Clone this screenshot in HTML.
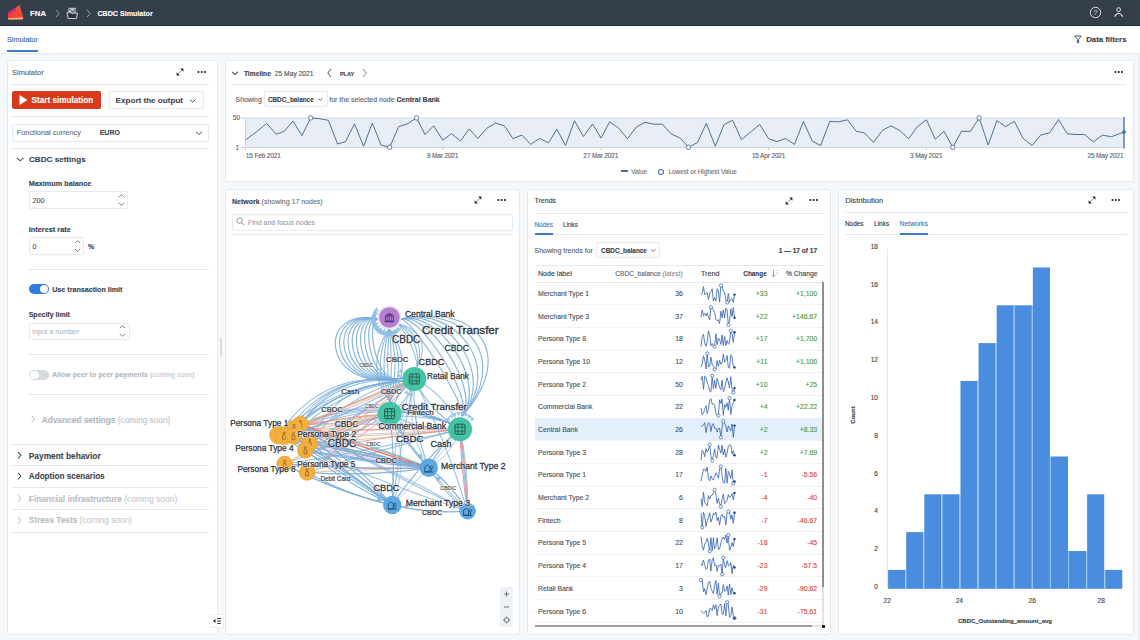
<!DOCTYPE html><html><head><meta charset="utf-8"><style>
html,body{margin:0;padding:0;width:1140px;height:640px;overflow:hidden;background:#f5f8fb;font-family:"Liberation Sans", sans-serif}
.t{position:absolute;white-space:nowrap;-webkit-text-stroke:0.12px currentColor}
.b{position:absolute;display:block}
</style></head><body>
<div class="b" style="left:0px;top:0px;width:1140px;height:25px;background:#343f4b"></div>
<div class="b" style="left:0px;top:25px;width:1140px;height:1px;background:#1d252d"></div>
<svg class="b" style="left:6px;top:3px;" width="19" height="18" viewBox="0 0 19 18"><defs><linearGradient id="lg" x1="0" y1="0" x2="0" y2="1"><stop offset="0" stop-color="#ee5a4a"/><stop offset="1" stop-color="#f53c22"/></linearGradient></defs><path d="M1.9 15.6 L2.1 9.6 L9.7 4.8 L13.6 1.8 L17.2 14.6 Z" fill="url(#lg)"/><path d="M2.1 9.6 L9.7 4.8 L10.6 6.6 L2.4 12.8 Z" fill="#d4237c"/><path d="M1.9 15 L17.2 14.2 L16.9 16.4 L2.6 16.7 Z" fill="#f2a877"/></svg>
<div class="t" style="left:30px;top:8.30px;line-height:12px;font-size:7.8px;font-weight:bold;color:#fff;">FNA</div>
<svg class="b" style="left:52.5px;top:8.8px;" width="9" height="9" viewBox="0 0 9 9"><path d="M3.1 1 L6.25 4.5 L3.1 8" fill="none" stroke="#9aa3ad" stroke-width="1"/></svg>
<svg class="b" style="left:66px;top:7px;" width="13" height="13" viewBox="0 0 13 13"><path d="M2.3 1.2 Q2.3 0.8 2.8 0.8 L9.6 0.8 Q10.1 0.8 10.1 1.3 L10.1 5.6 L2.3 5.6 Z" fill="#b9c0c8"/><path d="M2.8 1.6 L6 4.4 L9.6 3.8 M9.2 1.6 L9.4 3.6" fill="none" stroke="#343f4b" stroke-width="0.8"/><path d="M1 5.6 Q3.5 4.6 6 6.2 L11.6 6.2 L10.4 11.5 L2.1 11.5 Z" fill="#343f4b" stroke="#c4cad1" stroke-width="1"/><path d="M3.4 8.4 H9.4 M3.4 10 H9.4" stroke="#1e262f" stroke-width="0.8"/></svg>
<svg class="b" style="left:83.9px;top:8.8px;" width="9" height="9" viewBox="0 0 9 9"><path d="M3.1 1 L6.25 4.5 L3.1 8" fill="none" stroke="#9aa3ad" stroke-width="1"/></svg>
<div class="t" style="left:97.5px;top:8.30px;line-height:12px;font-size:7.1px;font-weight:bold;color:#fff;">CBDC Simulator</div>
<svg class="b" style="left:1089px;top:6px;" width="13" height="13" viewBox="0 0 13 13"><circle cx="6.5" cy="6.5" r="5.2" fill="none" stroke="#dfe3e7" stroke-width="1"/><text x="6.5" y="9.2" text-anchor="middle" font-size="7.8" fill="#dfe3e7" font-family="Liberation Sans">?</text></svg>
<svg class="b" style="left:1113px;top:6px;" width="12" height="12" viewBox="0 0 12 12"><circle cx="5.6" cy="3.6" r="1.9" fill="none" stroke="#e8ebee" stroke-width="1"/><path d="M1.6 10.6 Q5.6 3.8 9.8 10.6" fill="none" stroke="#e8ebee" stroke-width="1.1"/></svg>
<div class="b" style="left:0px;top:26px;width:1140px;height:27px;background:#fff"></div>
<div class="b" style="left:0px;top:53px;width:1140px;height:1px;background:#e7ebf0"></div>
<div class="t" style="left:7px;top:34.00px;line-height:12px;font-size:7.3px;font-weight:normal;color:#2f6bbb;">Simulator</div>
<div class="b" style="left:7px;top:50px;width:31px;height:2px;background:#3b79c9"></div>
<svg class="b" style="left:1074px;top:35px;" width="8" height="9" viewBox="0 0 8 9"><path d="M0.8 1 L7.2 1 L4.6 4.4 L4.6 7.8 L3.4 7.8 L3.4 4.4 Z" fill="none" stroke="#444" stroke-width="0.9"/></svg>
<div class="t" style="left:1086.2px;top:34.00px;line-height:12px;font-size:7.8px;font-weight:bold;color:#3a414b;">Data filters</div>
<div class="b" style="left:7px;top:60px;width:211px;height:575px;background:#fff;border:1px solid #e6eaef;border-radius:2px;box-sizing:border-box"></div>
<div class="t" style="left:12px;top:66.90px;line-height:12px;font-size:7.5px;font-weight:normal;color:#5d646d;">Simulator</div>
<svg class="b" style="left:174.7px;top:66.7px;" width="10" height="10" viewBox="0 0 10 10"><path d="M3 7 L7 3" stroke="#666" stroke-width="0.7"/><path d="M5.2 1.6 L8.4 1.6 L8.4 4.8 Z" fill="#222"/><path d="M1.6 5.2 L1.6 8.4 L4.8 8.4 Z" fill="#222"/></svg>
<svg class="b" style="left:195.6px;top:69.9px;" width="10" height="4" viewBox="0 0 10 4"><rect x="1.60" y="1.1" width="1.8" height="1.8" fill="#222"/><rect x="4.85" y="1.1" width="1.8" height="1.8" fill="#222"/><rect x="8.10" y="1.1" width="1.8" height="1.8" fill="#222"/></svg>
<div class="b" style="left:12px;top:84px;width:197px;height:1px;background:#e4e8ed"></div>
<div class="b" style="left:12px;top:91px;width:89px;height:18px;background:#d83a1d;border-radius:2px"></div>
<svg class="b" style="left:18px;top:94px;" width="10" height="12" viewBox="0 0 10 12"><path d="M1.5 1 L9.5 6 L1.5 11 Z" fill="#fff"/></svg>
<div class="t" style="left:31.5px;top:95.30px;line-height:12px;font-size:8.2px;font-weight:bold;color:#fff;">Start simulation</div>
<div class="b" style="left:108.5px;top:91px;width:95.5px;height:18px;background:#fff;border:1px solid #e7eaee;box-sizing:border-box;border-radius:2px"></div>
<div class="t" style="left:115.6px;top:95.10px;line-height:12px;font-size:8.1px;font-weight:bold;color:#414852;">Export the output</div>
<svg class="b" style="left:189.05px;top:97.05px;" width="7.5" height="7.5" viewBox="0 0 7.5 7.5"><path d="M1 2.65 L3.75 5.125 L6.5 2.65" fill="none" stroke="#555" stroke-width="1"/></svg>
<div class="b" style="left:12px;top:116px;width:197px;height:1px;background:#e4e8ed"></div>
<div class="b" style="left:12px;top:123.5px;width:196.5px;height:18.0px;background:#fff;border:1px solid #e7eaee;box-sizing:border-box;border-radius:2px"></div>
<div class="t" style="left:16.8px;top:127.00px;line-height:12px;font-size:7.35px;font-weight:normal;color:#6c737b;">Functional currency</div>
<div class="t" style="left:99.7px;top:127.00px;line-height:12px;font-size:7.0px;font-weight:bold;color:#414852;">EURO</div>
<svg class="b" style="left:195.3px;top:128.5px;" width="8" height="8" viewBox="0 0 8 8"><path d="M1 2.8 L4.0 5.5 L7 2.8" fill="none" stroke="#555" stroke-width="1"/></svg>
<div class="b" style="left:12px;top:148px;width:197px;height:1px;background:#e4e8ed"></div>
<svg class="b" style="left:16.25px;top:155.05px;" width="8.5" height="8.5" viewBox="0 0 8.5 8.5"><path d="M1 2.95 L4.25 5.875 L7.5 2.95" fill="none" stroke="#4a525c" stroke-width="1.1"/></svg>
<div class="t" style="left:29px;top:153.80px;line-height:12px;font-size:8.1px;font-weight:bold;color:#414852;">CBDC settings</div>
<div class="t" style="left:28.75px;top:177.50px;line-height:12px;font-size:7.25px;font-weight:bold;color:#3a414b;">Maximum balance</div>
<div class="b" style="left:28.75px;top:191px;width:99.25px;height:17.5px;background:#fff;border:1px solid #e7eaee;box-sizing:border-box;border-radius:2px"></div>
<div class="t" style="left:32.5px;top:194.50px;line-height:12px;font-size:7.3px;font-weight:normal;color:#555;">200</div>
<svg class="b" style="left:117.5px;top:192.8px;" width="7" height="14" viewBox="0 0 7 14"><path d="M0.8 4 L3.5 1.8 L6.2 4" fill="none" stroke="#666" stroke-width="0.8"/><path d="M0.8 10 L3.5 12.2 L6.2 10" fill="none" stroke="#666" stroke-width="0.8"/></svg>
<div class="t" style="left:28.75px;top:223.50px;line-height:12px;font-size:7.35px;font-weight:bold;color:#3a414b;">Interest rate</div>
<div class="b" style="left:28.75px;top:237px;width:55.45px;height:18px;background:#fff;border:1px solid #e7eaee;box-sizing:border-box;border-radius:2px"></div>
<div class="t" style="left:32.5px;top:240.50px;line-height:12px;font-size:7.3px;font-weight:normal;color:#555;">0</div>
<svg class="b" style="left:74.0px;top:238.8px;" width="7" height="14" viewBox="0 0 7 14"><path d="M0.8 4 L3.5 1.8 L6.2 4" fill="none" stroke="#666" stroke-width="0.8"/><path d="M0.8 10 L3.5 12.2 L6.2 10" fill="none" stroke="#666" stroke-width="0.8"/></svg>
<div class="t" style="left:88px;top:241.00px;line-height:12px;font-size:7.2px;font-weight:bold;color:#3a414b;">%</div>
<div class="b" style="left:29px;top:269px;width:180px;height:1px;background:#e4e8ed"></div>
<div class="b" style="left:29px;top:284px;width:20px;height:10px;background:#2f7de1;border-radius:5px"></div>
<div class="b" style="left:40px;top:285px;width:8px;height:8px;background:#fff;border-radius:50%"></div>
<div class="t" style="left:52.2px;top:283.90px;line-height:12px;font-size:7.15px;font-weight:bold;color:#3a414b;">Use transaction limit</div>
<div class="t" style="left:28.7px;top:308.90px;line-height:12px;font-size:7.0px;font-weight:bold;color:#3a414b;">Specify limit</div>
<div class="b" style="left:28.7px;top:322.5px;width:101.3px;height:17.5px;background:#fff;border:1px solid #e7eaee;box-sizing:border-box;border-radius:2px"></div>
<div class="t" style="left:32px;top:325.80px;line-height:12px;font-size:7.0px;font-weight:normal;color:#b6bcc3;">Input a number</div>
<svg class="b" style="left:119.1px;top:324px;" width="7" height="14" viewBox="0 0 7 14"><path d="M0.8 4 L3.5 1.8 L6.2 4" fill="none" stroke="#666" stroke-width="0.8"/><path d="M0.8 10 L3.5 12.2 L6.2 10" fill="none" stroke="#666" stroke-width="0.8"/></svg>
<div class="b" style="left:29px;top:354px;width:180px;height:1px;background:#e4e8ed"></div>
<div class="b" style="left:29px;top:369.5px;width:20px;height:10.5px;background:#d5dae0;border-radius:5px"></div>
<div class="b" style="left:30px;top:370.5px;width:8.5px;height:8.5px;background:#fff;border-radius:50%"></div>
<div class="t" style="left:52px;top:369.20px;line-height:12px;font-size:7.05px;font-weight:normal;color:#b3b9c0;"><b>Allow peer to peer payments</b> <span style="font-weight:normal;color:#c3c8ce">(coming soon)</span></div>
<div class="b" style="left:29px;top:394px;width:180px;height:1px;background:#e4e8ed"></div>
<svg class="b" style="left:28.5px;top:415.0px;" width="8" height="8" viewBox="0 0 8 8"><path d="M2.8 1 L5.5 4.0 L2.8 7" fill="none" stroke="#b3b9c0" stroke-width="1"/></svg>
<div class="t" style="left:41.7px;top:413.50px;line-height:12px;font-size:8.3px;font-weight:normal;color:#b3b9c0;"><b>Advanced settings</b> <span style="color:#c0c5cb">(coming soon)</span></div>
<div class="b" style="left:12px;top:443.5px;width:197px;height:1.0px;background:#e4e8ed"></div>
<svg class="b" style="left:14.75px;top:450.75px;" width="8.5" height="8.5" viewBox="0 0 8.5 8.5"><path d="M2.95 1 L5.875 4.25 L2.95 7.5" fill="none" stroke="#414852" stroke-width="1.1"/></svg>
<div class="t" style="left:28.8px;top:449.50px;line-height:12px;font-size:8.35px;font-weight:bold;color:#414852;">Payment behavior</div>
<div class="b" style="left:12px;top:465px;width:197px;height:1px;background:#e4e8ed"></div>
<svg class="b" style="left:14.75px;top:472.15px;" width="8.5" height="8.5" viewBox="0 0 8.5 8.5"><path d="M2.95 1 L5.875 4.25 L2.95 7.5" fill="none" stroke="#414852" stroke-width="1.1"/></svg>
<div class="t" style="left:28.8px;top:470.90px;line-height:12px;font-size:8.15px;font-weight:bold;color:#414852;">Adoption scenarios</div>
<div class="b" style="left:12px;top:487px;width:197px;height:1px;background:#e4e8ed"></div>
<svg class="b" style="left:14.75px;top:494.45px;" width="8.5" height="8.5" viewBox="0 0 8.5 8.5"><path d="M2.95 1 L5.875 4.25 L2.95 7.5" fill="none" stroke="#bfc4ca" stroke-width="1.1"/></svg>
<div class="t" style="left:28.8px;top:493.20px;line-height:12px;font-size:8.4px;font-weight:normal;color:#b9bec5;"><b>Financial infrastructure</b> <span style="color:#c6cbd0">(coming soon)</span></div>
<div class="b" style="left:12px;top:508.8px;width:197px;height:1.0px;background:#e4e8ed"></div>
<svg class="b" style="left:14.75px;top:516.25px;" width="8.5" height="8.5" viewBox="0 0 8.5 8.5"><path d="M2.95 1 L5.875 4.25 L2.95 7.5" fill="none" stroke="#bfc4ca" stroke-width="1.1"/></svg>
<div class="t" style="left:28.8px;top:515.00px;line-height:12px;font-size:8.25px;font-weight:normal;color:#b9bec5;"><b>Stress Tests</b> <span style="color:#c6cbd0">(coming soon)</span></div>
<div class="b" style="left:12px;top:531.5px;width:197px;height:1.0px;background:#e4e8ed"></div>
<div class="b" style="left:209px;top:614px;width:15px;height:13.5px;background:#fff;border:1px solid #eceff3;box-sizing:border-box;border-radius:2px"></div>
<svg class="b" style="left:211px;top:616px;" width="12" height="10" viewBox="0 0 12 10"><path d="M2 5 L4.5 3 L4.5 7 Z" fill="#222"/><rect x="6" y="2" width="4" height="1" fill="#333"/><rect x="6" y="4.5" width="4" height="1" fill="#333"/><rect x="6" y="7" width="4" height="1" fill="#555"/></svg>
<div class="b" style="left:220px;top:338px;width:2px;height:18px;background:#d9dde2;border-radius:1px"></div>
<div class="b" style="left:225px;top:60px;width:909px;height:122px;background:#fff;border:1px solid #e6eaef;border-radius:2px;box-sizing:border-box"></div>
<svg class="b" style="left:231.2px;top:69.0px;" width="8" height="8" viewBox="0 0 8 8"><path d="M1 2.8 L4.0 5.5 L7 2.8" fill="none" stroke="#4a525c" stroke-width="1.1"/></svg>
<div class="t" style="left:243.9px;top:67.50px;line-height:12px;font-size:6.7px;font-weight:bold;color:#3a414b;">Timeline</div>
<div class="t" style="left:274.8px;top:67.50px;line-height:12px;font-size:6.7px;font-weight:normal;color:#4a525c;">25 May 2021</div>
<svg class="b" style="left:326px;top:68px;" width="7" height="10" viewBox="0 0 7 10"><path d="M5 1 L1.8 5 L5 9" fill="none" stroke="#555" stroke-width="1"/></svg>
<div class="t" style="left:339.9px;top:67.50px;line-height:12px;font-size:5.6px;font-weight:bold;color:#3a414b;">PLAY</div>
<svg class="b" style="left:361px;top:68px;" width="7" height="10" viewBox="0 0 7 10"><path d="M2 1 L5.2 5 L2 9" fill="none" stroke="#888" stroke-width="1"/></svg>
<svg class="b" style="left:1112.5px;top:70px;" width="10" height="4" viewBox="0 0 10 4"><rect x="1.60" y="1.1" width="1.8" height="1.8" fill="#222"/><rect x="4.85" y="1.1" width="1.8" height="1.8" fill="#222"/><rect x="8.10" y="1.1" width="1.8" height="1.8" fill="#222"/></svg>
<div class="b" style="left:232px;top:84px;width:894px;height:1px;background:#e4e8ed"></div>
<div class="t" style="left:235.6px;top:94.10px;line-height:12px;font-size:6.8px;font-weight:normal;color:#5d646d;">Showing</div>
<div class="b" style="left:263.5px;top:91.3px;width:64.0px;height:16.200000000000003px;background:#fff;border:1px solid #e7eaee;box-sizing:border-box;border-radius:2px"></div>
<div class="t" style="left:267.9px;top:94.10px;line-height:12px;font-size:6.4px;font-weight:bold;color:#3a414b;">CBDC_balance</div>
<svg class="b" style="left:317.25px;top:96.35px;" width="6.5" height="6.5" viewBox="0 0 6.5 6.5"><path d="M1 2.3499999999999996 L3.25 4.375 L5.5 2.3499999999999996" fill="none" stroke="#666" stroke-width="0.9"/></svg>
<div class="t" style="left:329.2px;top:94.10px;line-height:12px;font-size:7.0px;font-weight:normal;color:#5d646d;">for the selected node <b style="color:#3a414b">Central Bank</b></div>
<svg class="b" style="left:230px;top:110px;" width="900" height="45" viewBox="0 0 900 45"><rect x="15.5" y="8" width="878.5" height="29.5" fill="#e9eef6"/><line x1="15.5" y1="8" x2="894" y2="8" stroke="#d5dce6" stroke-width="1"/><line x1="15.5" y1="37.5" x2="894" y2="37.5" stroke="#cfd6e0" stroke-width="1"/><line x1="15.5" y1="8" x2="15.5" y2="37.5" stroke="#cfd6e0" stroke-width="1"/><line x1="15.5" y1="37.5" x2="15.5" y2="40" stroke="#c5ccd6" stroke-width="1"/><line x1="212.8" y1="37.5" x2="212.8" y2="40" stroke="#c5ccd6" stroke-width="1"/><line x1="371" y1="37.5" x2="371" y2="40" stroke="#c5ccd6" stroke-width="1"/><line x1="538.6" y1="37.5" x2="538.6" y2="40" stroke="#c5ccd6" stroke-width="1"/><line x1="696.3" y1="37.5" x2="696.3" y2="40" stroke="#c5ccd6" stroke-width="1"/><line x1="894" y1="37.5" x2="894" y2="40" stroke="#c5ccd6" stroke-width="1"/><line x1="11" y1="8" x2="15.5" y2="8" stroke="#c5ccd6" stroke-width="1"/><line x1="11" y1="37.5" x2="15.5" y2="37.5" stroke="#c5ccd6" stroke-width="1"/><path d="M15.4 30.0 L27.8 20.8 L36.7 13.4 L46.2 24.2 L54.2 21.3 L63.0 11.0 L72.0 25.6 L80.7 7.9 L89.7 8.7 L98.4 10.3 L107.6 34.0 L115.5 31.6 L124.5 13.9 L133.6 36.3 L142.3 13.0 L151.0 35.0 L159.7 37.3 L168.7 16.6 L177.4 13.9 L186.5 7.9 L195.0 24.5 L203.7 15.8 L212.8 30.3 L221.4 23.7 L230.5 30.8 L239.2 19.0 L247.9 28.4 L256.9 18.2 L265.7 13.1 L274.4 15.8 L283.0 28.7 L291.8 25.0 L300.8 34.4 L309.5 28.4 L318.5 32.8 L326.9 19.3 L335.5 35.5 L344.5 10.7 L353.4 26.5 L362.6 13.9 L371.0 28.1 L379.7 11.8 L388.7 18.2 L397.4 28.7 L406.4 17.0 L415.0 12.3 L423.7 14.2 L432.4 14.2 L441.3 24.0 L450.3 28.1 L458.6 37.3 L467.6 32.4 L476.3 13.4 L485.3 36.3 L494.0 14.5 L502.7 10.3 L511.4 29.7 L520.5 22.1 L529.7 14.5 L538.6 28.7 L547.2 31.6 L555.5 28.4 L564.5 34.4 L573.4 11.4 L582.4 31.3 L590.7 35.5 L599.7 11.4 L608.7 11.8 L617.4 9.8 L626.3 21.3 L634.5 22.9 L643.5 32.4 L652.6 20.2 L661.0 15.8 L669.7 20.5 L678.7 28.7 L687.4 16.6 L696.5 9.8 L705.3 29.2 L714.0 21.3 L722.8 37.3 L731.5 21.3 L740.5 21.3 L749.2 7.9 L758.2 35.0 L766.9 10.7 L775.6 16.6 L784.4 11.4 L793.1 28.4 L802.1 35.5 L810.8 25.0 L819.5 22.9 L828.5 9.5 L837.2 23.7 L846.0 24.5 L854.5 24.5 L863.4 31.9 L872.3 25.2 L881.4 26.7 L894.0 22.1" fill="none" stroke="#4f6f98" stroke-width="1" stroke-linejoin="round"/><circle cx="80.7" cy="7.9" r="2.2" fill="#fff" stroke="#4f6f98" stroke-width="0.9"/><circle cx="159.7" cy="37.3" r="2.2" fill="#fff" stroke="#4f6f98" stroke-width="0.9"/><circle cx="186.5" cy="7.9" r="2.2" fill="#fff" stroke="#4f6f98" stroke-width="0.9"/><circle cx="458.6" cy="37.3" r="2.2" fill="#fff" stroke="#4f6f98" stroke-width="0.9"/><circle cx="722.8" cy="37.3" r="2.2" fill="#fff" stroke="#4f6f98" stroke-width="0.9"/><circle cx="749.2" cy="7.9" r="2.2" fill="#fff" stroke="#4f6f98" stroke-width="0.9"/><line x1="894" y1="7" x2="894" y2="38" stroke="#3f6aa8" stroke-width="1.3"/><circle cx="894" cy="22.099999999999994" r="1.8" fill="#3f6aa8"/></svg>
<div class="t" style="left:232.7px;top:112.40px;line-height:12px;font-size:6.6px;font-weight:normal;color:#666;">50</div>
<div class="t" style="left:235.5px;top:141.50px;line-height:12px;font-size:6.6px;font-weight:normal;color:#666;">1</div>
<div class="t" style="left:245.8px;top:150.10px;line-height:12px;font-size:6.5px;font-weight:normal;color:#5d646d;letter-spacing:-0.15px">15 Feb 2021</div>
<div class="t" style="left:342.6px;width:200px;text-align:center;top:150.10px;line-height:12px;font-size:6.5px;font-weight:normal;color:#5d646d;letter-spacing:-0.15px">9 Mar 2021</div>
<div class="t" style="left:500.79999999999995px;width:200px;text-align:center;top:150.10px;line-height:12px;font-size:6.5px;font-weight:normal;color:#5d646d;letter-spacing:-0.15px">27 Mar 2021</div>
<div class="t" style="left:668.6px;width:200px;text-align:center;top:150.10px;line-height:12px;font-size:6.5px;font-weight:normal;color:#5d646d;letter-spacing:-0.15px">15 Apr 2021</div>
<div class="t" style="left:826.3px;width:200px;text-align:center;top:150.10px;line-height:12px;font-size:6.5px;font-weight:normal;color:#5d646d;letter-spacing:-0.15px">3 May 2021</div>
<div class="t" style="right:16.59999999999991px;top:150.10px;line-height:12px;font-size:6.5px;font-weight:normal;color:#5d646d;letter-spacing:-0.15px">25 May 2021</div>
<div class="b" style="left:621px;top:170.3px;width:6.5px;height:1.299999999999983px;background:#4f6f98"></div>
<div class="t" style="left:631.2px;top:165.50px;line-height:12px;font-size:6.35px;font-weight:normal;color:#6c737b;">Value</div>
<svg class="b" style="left:656.5px;top:167.5px;" width="8" height="8" viewBox="0 0 8 8"><circle cx="4" cy="4" r="2.5" fill="#fff" stroke="#4f6f98" stroke-width="1.1"/></svg>
<div class="t" style="left:668.5px;top:165.50px;line-height:12px;font-size:6.35px;font-weight:normal;color:#6c737b;">Lowest or Highest Value</div>
<div class="b" style="left:225px;top:189px;width:295px;height:446px;background:#fff;border:1px solid #e6eaef;border-radius:2px;box-sizing:border-box"></div>
<div class="t" style="left:232px;top:195.50px;line-height:12px;font-size:7.0px;font-weight:normal;color:#3a414b;"><b style="color:#3a414b">Network</b> <span style="color:#6c737b">(showing 17 nodes)</span></div>
<svg class="b" style="left:473.2px;top:195.2px;" width="10" height="10" viewBox="0 0 10 10"><path d="M3 7 L7 3" stroke="#666" stroke-width="0.7"/><path d="M5.2 1.6 L8.4 1.6 L8.4 4.8 Z" fill="#222"/><path d="M1.6 5.2 L1.6 8.4 L4.8 8.4 Z" fill="#222"/></svg>
<svg class="b" style="left:495.9px;top:198.2px;" width="10" height="4" viewBox="0 0 10 4"><rect x="1.60" y="1.1" width="1.8" height="1.8" fill="#222"/><rect x="4.85" y="1.1" width="1.8" height="1.8" fill="#222"/><rect x="8.10" y="1.1" width="1.8" height="1.8" fill="#222"/></svg>
<div class="b" style="left:232px;top:213.5px;width:280.5px;height:17.5px;background:#fff;border:1px solid #e7eaee;box-sizing:border-box;border-radius:2px"></div>
<svg class="b" style="left:236px;top:217px;" width="9" height="9" viewBox="0 0 9 9"><circle cx="3.6" cy="3.6" r="2.7" fill="none" stroke="#888" stroke-width="0.9"/><path d="M5.6 5.6 L8 8" stroke="#888" stroke-width="1"/></svg>
<div class="t" style="left:248px;top:216.80px;line-height:12px;font-size:7.0px;font-weight:normal;color:#9aa1a9;">Find and focus nodes</div>
<div class="b" style="left:232px;top:233.5px;width:280.5px;height:1.0px;background:#e8ecf0"></div>
<div class="b" style="left:499.5px;top:587px;width:13.5px;height:40px;background:#eef1f5;border-radius:2px"></div>
<svg class="b" style="left:500px;top:588px;" width="13" height="39" viewBox="0 0 13 39"><path d="M6.5 3.5 V8.5 M4 6 H9" stroke="#666" stroke-width="0.9"/><path d="M4 19 H9" stroke="#666" stroke-width="0.9"/><circle cx="6.5" cy="32" r="2.3" fill="none" stroke="#666" stroke-width="0.9"/><path d="M6.5 28.5 V29.7 M6.5 34.3 V35.5 M3 32 H4.2 M8.8 32 H10" stroke="#666" stroke-width="0.8"/></svg>
<svg class="b" style="left:225px;top:234px;overflow:hidden" width="295" height="400" viewBox="0 0 295 400"><path d="M154.4 85.5 C140.9 76.3 146.9 154.2 177.3 144.0" fill="none" stroke="#7aaedb" stroke-width="1.15" opacity="0.9"/><path d="M154.4 85.5 C135.2 75.6 141.2 154.9 177.3 144.0" fill="none" stroke="#7aaedb" stroke-width="1.15" opacity="0.9"/><path d="M154.4 85.5 C129.5 74.9 135.5 155.6 177.3 144.0" fill="none" stroke="#7aaedb" stroke-width="1.15" opacity="0.9"/><path d="M154.4 85.5 C123.8 74.1 129.8 156.4 177.3 144.0" fill="none" stroke="#7aaedb" stroke-width="1.15" opacity="0.9"/><path d="M154.4 85.5 C118.1 73.4 124.1 157.1 177.3 144.0" fill="none" stroke="#7aaedb" stroke-width="1.15" opacity="0.9"/><path d="M154.4 85.5 C112.4 72.7 118.4 157.8 177.3 144.0" fill="none" stroke="#7aaedb" stroke-width="1.15" opacity="0.9"/><path d="M154.4 85.5 C106.7 72.0 112.7 158.5 177.3 144.0" fill="none" stroke="#7aaedb" stroke-width="1.15" opacity="0.9"/><path d="M154.4 85.5 C101.0 71.3 107.0 159.2 177.3 144.0" fill="none" stroke="#7aaedb" stroke-width="1.15" opacity="0.9"/><path d="M154.4 85.5 C95.3 70.5 101.3 160.0 177.3 144.0" fill="none" stroke="#7aaedb" stroke-width="1.15" opacity="0.9"/><path d="M154.4 85.5 C89.6 69.8 95.6 160.7 177.3 144.0" fill="none" stroke="#7aaedb" stroke-width="1.15" opacity="0.9"/><path d="M164.4 94.5 Q190.1 131.0 164.6 167.7" fill="none" stroke="#7aaedb" stroke-width="1.08" opacity="0.88"/><path d="M164.4 94.5 Q182.8 131.1 164.6 167.7" fill="none" stroke="#7aaedb" stroke-width="1.08" opacity="0.88"/><path d="M164.4 94.5 Q175.5 131.1 164.6 167.7" fill="none" stroke="#7aaedb" stroke-width="1.08" opacity="0.88"/><path d="M164.4 94.5 Q168.2 131.1 164.6 167.7" fill="none" stroke="#7aaedb" stroke-width="1.08" opacity="0.88"/><path d="M164.4 94.5 Q160.8 131.1 164.6 167.7" fill="none" stroke="#7aaedb" stroke-width="1.08" opacity="0.88"/><path d="M164.4 94.5 Q153.5 131.1 164.6 167.7" fill="none" stroke="#7aaedb" stroke-width="1.08" opacity="0.88"/><path d="M164.4 94.5 Q146.2 131.2 164.6 167.7" fill="none" stroke="#7aaedb" stroke-width="1.08" opacity="0.88"/><path d="M164.4 94.5 Q138.9 131.2 164.6 167.7" fill="none" stroke="#7aaedb" stroke-width="1.08" opacity="0.88"/><path d="M172.4 89.5 Q188.9 108.3 192.3 133.0" fill="none" stroke="#7aaedb" stroke-width="1.08" opacity="0.83"/><path d="M172.4 89.5 Q195.4 105.3 192.3 133.0" fill="none" stroke="#7aaedb" stroke-width="1.08" opacity="0.83"/><path d="M172.4 89.5 Q201.9 102.3 192.3 133.0" fill="none" stroke="#7aaedb" stroke-width="1.08" opacity="0.83"/><path d="M172.4 89.5 Q208.5 99.3 192.3 133.0" fill="none" stroke="#7aaedb" stroke-width="1.08" opacity="0.83"/><path d="M174.4 85.5 C183.6 78.3 240.7 169.8 237.0 182.2" fill="none" stroke="#7aaedb" stroke-width="1.15" opacity="0.9"/><path d="M174.4 85.5 C193.2 76.7 248.3 162.6 237.0 182.2" fill="none" stroke="#7aaedb" stroke-width="1.15" opacity="0.9"/><path d="M174.4 85.5 C202.8 75.1 255.9 155.4 237.0 182.2" fill="none" stroke="#7aaedb" stroke-width="1.15" opacity="0.9"/><path d="M174.4 85.5 C212.4 73.5 263.5 148.2 237.0 182.2" fill="none" stroke="#7aaedb" stroke-width="1.15" opacity="0.9"/><path d="M174.4 85.5 C222.0 71.9 271.1 141.0 237.0 182.2" fill="none" stroke="#7aaedb" stroke-width="1.15" opacity="0.9"/><path d="M174.4 85.5 C231.6 70.3 278.7 133.8 237.0 182.2" fill="none" stroke="#7aaedb" stroke-width="1.15" opacity="0.9"/><path d="M174.4 85.5 C241.2 68.7 286.3 126.6 237.0 182.2" fill="none" stroke="#7aaedb" stroke-width="1.15" opacity="0.9"/><path d="M174.4 85.5 C250.8 67.1 293.9 119.4 237.0 182.2" fill="none" stroke="#7aaedb" stroke-width="1.15" opacity="0.9"/><path d="M75.5 190.2 Q118.6 150.3 177.3 147.0" fill="none" stroke="#7aaedb" stroke-width="1.01" opacity="0.83"/><path d="M75.5 190.2 Q112.6 136.0 177.3 147.0" fill="none" stroke="#7aaedb" stroke-width="1.01" opacity="0.83"/><path d="M75.5 190.2 Q150.0 156.8 225.0 189.2" fill="none" stroke="#7aaedb" stroke-width="1.01" opacity="0.77"/><path d="M69.0 194.0 Q114.7 151.0 177.3 147.0" fill="none" stroke="#7aaedb" stroke-width="1.01" opacity="0.83"/><path d="M69.0 194.0 Q108.1 135.8 177.3 147.0" fill="none" stroke="#7aaedb" stroke-width="1.01" opacity="0.83"/><path d="M69.0 194.0 Q145.9 157.3 225.0 189.2" fill="none" stroke="#7aaedb" stroke-width="1.01" opacity="0.77"/><path d="M53.5 201.0 Q105.7 151.7 177.3 147.0" fill="none" stroke="#7aaedb" stroke-width="1.01" opacity="0.83"/><path d="M53.5 201.0 Q98.1 134.4 177.3 147.0" fill="none" stroke="#7aaedb" stroke-width="1.01" opacity="0.83"/><path d="M53.5 201.0 Q136.7 157.4 225.0 189.2" fill="none" stroke="#7aaedb" stroke-width="1.01" opacity="0.77"/><path d="M59.1 201.7 Q108.4 153.1 177.3 147.0" fill="none" stroke="#7aaedb" stroke-width="1.01" opacity="0.83"/><path d="M59.1 201.7 Q100.7 136.5 177.3 147.0" fill="none" stroke="#7aaedb" stroke-width="1.01" opacity="0.83"/><path d="M59.1 201.7 Q139.3 159.0 225.0 189.2" fill="none" stroke="#7aaedb" stroke-width="1.01" opacity="0.77"/><path d="M68.4 202.2 Q112.9 155.0 177.3 147.0" fill="none" stroke="#7aaedb" stroke-width="1.01" opacity="0.83"/><path d="M68.4 202.2 Q105.2 139.8 177.3 147.0" fill="none" stroke="#7aaedb" stroke-width="1.01" opacity="0.83"/><path d="M68.4 202.2 Q143.8 161.2 225.0 189.2" fill="none" stroke="#7aaedb" stroke-width="1.01" opacity="0.77"/><path d="M84.8 208.8 Q119.9 161.2 177.3 147.0" fill="none" stroke="#7aaedb" stroke-width="1.01" opacity="0.83"/><path d="M84.8 208.8 Q111.3 148.3 177.3 147.0" fill="none" stroke="#7aaedb" stroke-width="1.01" opacity="0.83"/><path d="M84.8 208.8 Q150.6 168.2 225.0 189.2" fill="none" stroke="#7aaedb" stroke-width="1.01" opacity="0.77"/><path d="M75.5 190.2 Q155.4 188.5 235.0 195.2" fill="none" stroke="#ef9aa8" stroke-width="1.08" opacity="0.83"/><path d="M75.5 190.2 Q120.1 185.3 164.6 179.7" fill="none" stroke="#f2b27a" stroke-width="1.08" opacity="0.83"/><path d="M75.5 190.2 Q140.2 210.3 203.8 233.8" fill="none" stroke="#e4877a" stroke-width="1.08" opacity="0.83"/><path d="M75.5 190.2 Q132.9 168.8 189.3 145.0" fill="none" stroke="#b7d39a" stroke-width="1.08" opacity="0.83"/><path d="M69.0 194.0 Q152.0 196.7 235.0 195.2" fill="none" stroke="#f2b27a" stroke-width="1.08" opacity="0.83"/><path d="M69.0 194.0 Q116.2 182.7 164.6 179.7" fill="none" stroke="#e4877a" stroke-width="1.08" opacity="0.83"/><path d="M69.0 194.0 Q138.3 207.3 203.8 233.8" fill="none" stroke="#b7d39a" stroke-width="1.08" opacity="0.83"/><path d="M69.0 194.0 Q130.8 173.6 189.3 145.0" fill="none" stroke="#e9a6d2" stroke-width="1.08" opacity="0.83"/><path d="M53.5 201.0 Q144.1 193.7 235.0 195.2" fill="none" stroke="#e4877a" stroke-width="1.08" opacity="0.83"/><path d="M53.5 201.0 Q108.5 187.4 164.6 179.7" fill="none" stroke="#b7d39a" stroke-width="1.08" opacity="0.83"/><path d="M53.5 201.0 Q127.0 224.8 203.8 233.8" fill="none" stroke="#e9a6d2" stroke-width="1.08" opacity="0.83"/><path d="M53.5 201.0 Q121.2 172.6 189.3 145.0" fill="none" stroke="#f0c27a" stroke-width="1.08" opacity="0.83"/><path d="M59.1 201.7 Q147.3 204.4 235.0 195.2" fill="none" stroke="#b7d39a" stroke-width="1.08" opacity="0.83"/><path d="M59.1 201.7 Q111.8 190.5 164.6 179.7" fill="none" stroke="#e9a6d2" stroke-width="1.08" opacity="0.83"/><path d="M59.1 201.7 Q131.0 219.8 203.8 233.8" fill="none" stroke="#f0c27a" stroke-width="1.08" opacity="0.83"/><path d="M59.1 201.7 Q122.2 168.8 189.3 145.0" fill="none" stroke="#d98f8f" stroke-width="1.08" opacity="0.83"/><path d="M68.4 202.2 Q151.8 200.9 235.0 195.2" fill="none" stroke="#e9a6d2" stroke-width="1.08" opacity="0.83"/><path d="M68.4 202.2 Q117.3 194.5 164.6 179.7" fill="none" stroke="#f0c27a" stroke-width="1.08" opacity="0.83"/><path d="M68.4 202.2 Q136.0 218.3 203.8 233.8" fill="none" stroke="#d98f8f" stroke-width="1.08" opacity="0.83"/><path d="M68.4 202.2 Q130.2 176.5 189.3 145.0" fill="none" stroke="#7aaedb" stroke-width="1.08" opacity="0.83"/><path d="M84.8 208.8 Q160.1 204.6 235.0 195.2" fill="none" stroke="#f0c27a" stroke-width="1.08" opacity="0.83"/><path d="M84.8 208.8 Q123.4 190.8 164.6 179.7" fill="none" stroke="#d98f8f" stroke-width="1.08" opacity="0.83"/><path d="M84.8 208.8 Q143.7 224.4 203.8 233.8" fill="none" stroke="#7aaedb" stroke-width="1.08" opacity="0.83"/><path d="M84.8 208.8 Q137.6 177.9 189.3 145.0" fill="none" stroke="#7aaedb" stroke-width="1.08" opacity="0.83"/><path d="M80.4 216.4 Q157.3 202.7 235.0 195.2" fill="none" stroke="#d98f8f" stroke-width="1.08" opacity="0.83"/><path d="M80.4 216.4 Q120.8 194.1 164.6 179.7" fill="none" stroke="#7aaedb" stroke-width="1.08" opacity="0.83"/><path d="M80.4 216.4 Q141.5 229.6 203.8 233.8" fill="none" stroke="#7aaedb" stroke-width="1.08" opacity="0.83"/><path d="M80.4 216.4 Q134.7 180.4 189.3 145.0" fill="none" stroke="#ef9aa8" stroke-width="1.08" opacity="0.83"/><path d="M59.7 230.1 Q148.1 216.5 235.0 195.2" fill="none" stroke="#7aaedb" stroke-width="1.08" opacity="0.83"/><path d="M59.7 230.1 Q114.1 208.9 164.6 179.7" fill="none" stroke="#7aaedb" stroke-width="1.08" opacity="0.83"/><path d="M59.7 230.1 Q131.7 235.0 203.8 233.8" fill="none" stroke="#ef9aa8" stroke-width="1.08" opacity="0.83"/><path d="M59.7 230.1 Q128.1 193.0 189.3 145.0" fill="none" stroke="#f2b27a" stroke-width="1.08" opacity="0.83"/><path d="M82.1 238.3 Q158.1 215.1 235.0 195.2" fill="none" stroke="#7aaedb" stroke-width="1.08" opacity="0.83"/><path d="M82.1 238.3 Q125.1 211.5 164.6 179.7" fill="none" stroke="#ef9aa8" stroke-width="1.08" opacity="0.83"/><path d="M82.1 238.3 Q142.9 235.4 203.8 233.8" fill="none" stroke="#f2b27a" stroke-width="1.08" opacity="0.83"/><path d="M82.1 238.3 Q139.8 196.3 189.3 145.0" fill="none" stroke="#e4877a" stroke-width="1.08" opacity="0.83"/><path d="M75.5 190.2 Q137.0 219.8 203.8 233.8" fill="none" stroke="#7aaedb" stroke-width="1.22" opacity="0.94"/><path d="M75.5 190.2 Q126.6 224.6 167.3 270.9" fill="none" stroke="#7aaedb" stroke-width="1.22" opacity="0.94"/><path d="M69.0 194.0 Q138.7 206.0 203.8 233.8" fill="none" stroke="#7aaedb" stroke-width="1.22" opacity="0.94"/><path d="M69.0 194.0 Q121.6 228.0 167.3 270.9" fill="none" stroke="#7aaedb" stroke-width="1.22" opacity="0.94"/><path d="M53.5 201.0 Q126.2 228.6 203.8 233.8" fill="none" stroke="#7aaedb" stroke-width="1.22" opacity="0.94"/><path d="M53.5 201.0 Q111.1 234.8 167.3 270.9" fill="none" stroke="#7aaedb" stroke-width="1.22" opacity="0.94"/><path d="M59.1 201.7 Q130.8 220.7 203.8 233.8" fill="none" stroke="#7aaedb" stroke-width="1.22" opacity="0.94"/><path d="M59.1 201.7 Q115.4 232.9 167.3 270.9" fill="none" stroke="#7aaedb" stroke-width="1.22" opacity="0.94"/><path d="M68.4 202.2 Q136.1 218.2 203.8 233.8" fill="none" stroke="#7aaedb" stroke-width="1.22" opacity="0.94"/><path d="M68.4 202.2 Q119.1 234.7 167.3 270.9" fill="none" stroke="#7aaedb" stroke-width="1.22" opacity="0.94"/><path d="M84.8 208.8 Q144.9 218.5 203.8 233.8" fill="none" stroke="#7aaedb" stroke-width="1.22" opacity="0.94"/><path d="M84.8 208.8 Q125.2 241.0 167.3 270.9" fill="none" stroke="#7aaedb" stroke-width="1.22" opacity="0.94"/><path d="M80.4 216.4 Q141.9 226.8 203.8 233.8" fill="none" stroke="#7aaedb" stroke-width="1.22" opacity="0.94"/><path d="M80.4 216.4 Q120.3 249.3 167.3 270.9" fill="none" stroke="#7aaedb" stroke-width="1.22" opacity="0.94"/><path d="M59.7 230.1 Q131.6 236.1 203.8 233.8" fill="none" stroke="#7aaedb" stroke-width="1.22" opacity="0.94"/><path d="M59.7 230.1 Q110.7 257.9 167.3 270.9" fill="none" stroke="#7aaedb" stroke-width="1.22" opacity="0.94"/><path d="M82.1 238.3 Q143.2 243.0 203.8 233.8" fill="none" stroke="#7aaedb" stroke-width="1.22" opacity="0.94"/><path d="M82.1 238.3 Q122.1 261.3 167.3 270.9" fill="none" stroke="#7aaedb" stroke-width="1.22" opacity="0.94"/><path d="M75.5 190.2 Q157.6 236.6 242.6 277.2" fill="none" stroke="#7aaedb" stroke-width="1.08" opacity="0.77"/><path d="M69.0 194.0 Q158.6 229.8 242.6 277.2" fill="none" stroke="#7aaedb" stroke-width="1.08" opacity="0.77"/><path d="M53.5 201.0 Q145.3 245.9 242.6 277.2" fill="none" stroke="#7aaedb" stroke-width="1.08" opacity="0.77"/><path d="M189.3 145.0 Q186.6 191.0 203.8 233.8" fill="none" stroke="#7aaedb" stroke-width="1.08" opacity="0.88"/><path d="M189.3 145.0 Q178.6 192.3 203.8 233.8" fill="none" stroke="#7aaedb" stroke-width="0.94" opacity="0.66"/><path d="M189.3 145.0 Q176.2 207.6 167.3 270.9" fill="none" stroke="#7aaedb" stroke-width="1.08" opacity="0.88"/><path d="M189.3 145.0 Q164.8 205.6 167.3 270.9" fill="none" stroke="#7aaedb" stroke-width="0.94" opacity="0.66"/><path d="M189.3 145.0 Q222.1 208.6 242.6 277.2" fill="none" stroke="#7aaedb" stroke-width="1.08" opacity="0.77"/><path d="M164.6 179.7 Q179.9 209.9 203.8 233.8" fill="none" stroke="#7aaedb" stroke-width="1.08" opacity="0.88"/><path d="M164.6 179.7 Q182.2 208.2 203.8 233.8" fill="none" stroke="#7aaedb" stroke-width="0.94" opacity="0.66"/><path d="M164.6 179.7 Q170.7 225.2 167.3 270.9" fill="none" stroke="#7aaedb" stroke-width="1.08" opacity="0.88"/><path d="M164.6 179.7 Q185.9 224.7 167.3 270.9" fill="none" stroke="#7aaedb" stroke-width="0.94" opacity="0.66"/><path d="M164.6 179.7 Q198.1 232.9 242.6 277.2" fill="none" stroke="#7aaedb" stroke-width="1.08" opacity="0.77"/><path d="M235.0 195.2 Q214.9 210.8 203.8 233.8" fill="none" stroke="#7aaedb" stroke-width="1.08" opacity="0.88"/><path d="M235.0 195.2 Q227.3 220.9 203.8 233.8" fill="none" stroke="#7aaedb" stroke-width="0.94" opacity="0.66"/><path d="M235.0 195.2 Q195.7 228.2 167.3 270.9" fill="none" stroke="#7aaedb" stroke-width="1.08" opacity="0.88"/><path d="M235.0 195.2 Q204.5 236.1 167.3 270.9" fill="none" stroke="#7aaedb" stroke-width="0.94" opacity="0.66"/><path d="M235.0 195.2 Q243.4 235.8 242.6 277.2" fill="none" stroke="#7aaedb" stroke-width="1.08" opacity="0.77"/><path d="M189.3 145.0 Q204.6 177.0 235.0 195.2" fill="none" stroke="#7aaedb" stroke-width="1.08" opacity="0.88"/><path d="M189.3 145.0 Q222.2 161.0 235.0 195.2" fill="none" stroke="#7aaedb" stroke-width="1.08" opacity="0.77"/><path d="M164.6 179.7 Q197.5 198.0 235.0 195.2" fill="none" stroke="#7aaedb" stroke-width="1.08" opacity="0.88"/><path d="M164.6 179.7 Q202.9 173.4 235.0 195.2" fill="none" stroke="#7aaedb" stroke-width="1.08" opacity="0.77"/><path d="M189.3 145.0 Q171.7 158.6 164.6 179.7" fill="none" stroke="#7aaedb" stroke-width="1.08" opacity="0.88"/><path d="M189.3 145.0 Q183.9 167.3 164.6 179.7" fill="none" stroke="#7aaedb" stroke-width="1.08" opacity="0.77"/><path d="M242.6 277.2 Q204.4 280.1 167.3 270.9" fill="none" stroke="#7aaedb" stroke-width="1.22" opacity="0.94"/><path d="M242.6 277.2 Q227.5 251.6 203.8 233.8" fill="none" stroke="#7aaedb" stroke-width="1.22" opacity="0.94"/><path d="M242.6 277.2 Q218.9 259.4 203.8 233.8" fill="none" stroke="#7aaedb" stroke-width="1.08" opacity="0.77"/><path d="M242.6 277.2 Q241.3 236.0 235.0 195.2" fill="none" stroke="#e3a0a0" stroke-width="1.22" opacity="0.99"/><path d="M242.6 277.2 Q236.3 236.4 235.0 195.2" fill="none" stroke="#e3a0c0" stroke-width="1.22" opacity="0.99"/><path d="M242.6 277.2 Q238.8 236.2 235.0 195.2" fill="none" stroke="#7aaedb" stroke-width="1.08" opacity="0.77"/><path d="M75.5 190.2 Q138.8 214.6 203.8 233.8" fill="none" stroke="#e07060" stroke-width="1.35" opacity="0.99"/><path d="M157.5 264.9 L152.4 264.6 L155.0 260.4 Z" fill="#7fb3e0" opacity="0.95"/><path d="M158.1 264.0 L153.0 263.3 L156.0 259.3 Z" fill="#7fb3e0" opacity="0.95"/><path d="M156.5 266.8 L151.5 267.5 L153.2 262.9 Z" fill="#7fb3e0" opacity="0.95"/><path d="M167.0 259.4 L164.4 255.0 L169.3 254.8 Z" fill="#7fb3e0" opacity="0.95"/><path d="M178.8 271.9 L183.5 269.8 L183.0 274.7 Z" fill="#7fb3e0" opacity="0.95"/><path d="M192.8 230.5 L187.8 231.6 L189.2 226.9 Z" fill="#7fb3e0" opacity="0.95"/><path d="M192.6 231.2 L187.7 232.6 L188.8 227.8 Z" fill="#7fb3e0" opacity="0.95"/><path d="M192.4 232.2 L187.6 234.0 L188.3 229.1 Z" fill="#7fb3e0" opacity="0.95"/><path d="M211.5 242.4 L216.3 244.1 L212.6 247.4 Z" fill="#7fb3e0" opacity="0.95"/><path d="M197.1 224.5 L192.4 222.3 L196.4 219.4 Z" fill="#7fb3e0" opacity="0.95"/><path d="M236.2 208.6 L239.1 212.9 L234.2 213.4 Z" fill="#e3a0a0" opacity="0.95"/><path d="M150.9 77.5 A14 14 0 0 0 174.4 94.0" fill="none" stroke="#8fbfe6" stroke-width="4" opacity="0.9"/><path d="M154.0 77.5 L148.9 77.4 L151.3 73.1 Z" fill="#8fbfe6" opacity="0.9"/><path d="M152.9 80.2 L147.9 81.3 L149.2 76.6 Z" fill="#8fbfe6" opacity="0.9"/><path d="M152.4 83.1 L147.8 85.4 L148.0 80.5 Z" fill="#8fbfe6" opacity="0.9"/><path d="M152.7 86.0 L148.8 89.4 L147.7 84.5 Z" fill="#8fbfe6" opacity="0.9"/><path d="M153.6 88.8 L150.7 93.0 L148.5 88.5 Z" fill="#8fbfe6" opacity="0.9"/><path d="M155.2 91.2 L153.4 96.0 L150.2 92.2 Z" fill="#8fbfe6" opacity="0.9"/><path d="M157.3 93.2 L156.7 98.3 L152.7 95.4 Z" fill="#8fbfe6" opacity="0.9"/><path d="M159.9 94.6 L160.5 99.7 L155.9 97.9 Z" fill="#8fbfe6" opacity="0.9"/><path d="M162.7 95.4 L164.6 100.2 L159.7 99.5 Z" fill="#8fbfe6" opacity="0.9"/><path d="M165.7 95.4 L168.6 99.7 L163.7 100.2 Z" fill="#8fbfe6" opacity="0.9"/><path d="M168.5 94.8 L172.4 98.2 L167.7 99.9 Z" fill="#8fbfe6" opacity="0.9"/><path d="M245.0 186.8 L246.6 182.6 L249.4 186.0 Z" fill="#8fbfe6" opacity="0.9"/><path d="M242.6 184.7 L243.2 180.2 L246.8 182.7 Z" fill="#8fbfe6" opacity="0.9"/><path d="M239.9 183.1 L239.3 178.6 L243.4 180.3 Z" fill="#8fbfe6" opacity="0.9"/><path d="M236.8 182.3 L235.2 178.1 L239.5 178.7 Z" fill="#8fbfe6" opacity="0.9"/><path d="M233.6 182.3 L231.0 178.5 L235.4 178.1 Z" fill="#8fbfe6" opacity="0.9"/><path d="M230.6 183.0 L227.1 180.0 L231.3 178.5 Z" fill="#8fbfe6" opacity="0.9"/><path d="M227.7 184.4 L223.7 182.3 L227.3 179.9 Z" fill="#8fbfe6" opacity="0.9"/><path d="M225.3 186.5 L220.9 185.5 L223.8 182.2 Z" fill="#8fbfe6" opacity="0.9"/><path d="M178.0 138.5 L173.5 138.4 L175.7 134.6 Z" fill="#8fbfe6" opacity="0.9"/><path d="M176.6 142.3 L172.2 143.6 L173.1 139.3 Z" fill="#8fbfe6" opacity="0.9"/><path d="M176.4 146.4 L172.6 149.0 L172.2 144.6 Z" fill="#8fbfe6" opacity="0.9"/><path d="M177.4 150.3 L174.7 153.9 L172.9 149.9 Z" fill="#8fbfe6" opacity="0.9"/><path d="M179.6 153.7 L178.1 158.0 L175.2 154.7 Z" fill="#8fbfe6" opacity="0.9"/><path d="M182.8 156.3 L182.7 160.8 L178.9 158.6 Z" fill="#8fbfe6" opacity="0.9"/><path d="M186.6 157.7 L187.9 162.1 L183.6 161.2 Z" fill="#8fbfe6" opacity="0.9"/><path d="M152.4 184.1 L149.4 187.6 L147.9 183.4 Z" fill="#8fbfe6" opacity="0.8"/><path d="M154.6 188.1 L153.0 192.3 L150.2 188.9 Z" fill="#8fbfe6" opacity="0.8"/><path d="M158.1 191.0 L158.0 195.5 L154.2 193.3 Z" fill="#8fbfe6" opacity="0.8"/><path d="M162.3 192.5 L163.8 196.8 L159.5 196.1 Z" fill="#8fbfe6" opacity="0.8"/><path d="M166.9 192.5 L169.7 196.1 L165.4 196.8 Z" fill="#8fbfe6" opacity="0.8"/><path d="M171.1 191.0 L175.0 193.3 L171.2 195.5 Z" fill="#8fbfe6" opacity="0.8"/><path d="M174.6 188.1 L179.0 188.9 L176.2 192.3 Z" fill="#8fbfe6" opacity="0.8"/><circle cx="164.39999999999998" cy="83.5" r="12" fill="#efe3f6"/><circle cx="164.39999999999998" cy="83.5" r="10.3" fill="#b47fcf"/><g transform="translate(159.39999999999998,78.5)"><path d="M0.5 3 L5 0.5 L9.5 3 Z" fill="#5a2f72"/><rect x="1" y="3.5" width="8" height="5" fill="none" stroke="#5a2f72" stroke-width="0.9"/><rect x="0.5" y="8.5" width="9" height="1.2" fill="#5a2f72"/><path d="M3 4 V8 M5 4 V8 M7 4 V8" stroke="#5a2f72" stroke-width="0.7"/></g><circle cx="189.3" cy="145" r="12" fill="#46c2a4"/><g transform="translate(183.8,139.5)"><rect x="0.5" y="0.5" width="10" height="10" rx="1.5" fill="none" stroke="#1f5a4a" stroke-width="1"/><path d="M0.5 3.5 H10.5 M0.5 7.5 H10.5 M3.5 0.5 V10.5 M7.5 0.5 V10.5" stroke="#1f5a4a" stroke-width="0.8"/></g><circle cx="164.60000000000002" cy="179.7" r="12" fill="#46c2a4"/><g transform="translate(159.10000000000002,174.2)"><rect x="0.5" y="0.5" width="10" height="10" rx="1.5" fill="none" stroke="#1f5a4a" stroke-width="1"/><path d="M0.5 3.5 H10.5 M0.5 7.5 H10.5 M3.5 0.5 V10.5 M7.5 0.5 V10.5" stroke="#1f5a4a" stroke-width="0.8"/></g><circle cx="235" cy="195.2" r="12" fill="#46c2a4"/><g transform="translate(229.5,189.7)"><rect x="0.5" y="0.5" width="10" height="10" rx="1.5" fill="none" stroke="#1f5a4a" stroke-width="1"/><path d="M0.5 3.5 H10.5 M0.5 7.5 H10.5 M3.5 0.5 V10.5 M7.5 0.5 V10.5" stroke="#1f5a4a" stroke-width="0.8"/></g><circle cx="203.8" cy="233.8" r="9.2" fill="#5ea9e2"/><g transform="translate(199.3,229.8)"><path d="M0.5 8 V3 L3 1 L5.5 3 V8 Z" fill="none" stroke="#1d4468" stroke-width="0.8"/><circle cx="7.3" cy="3.5" r="1.3" fill="none" stroke="#1d4468" stroke-width="0.7"/><path d="M7.3 5 V8 M0 8.2 H9" stroke="#1d4468" stroke-width="0.8"/></g><circle cx="167.3" cy="270.9" r="9.2" fill="#5ea9e2"/><g transform="translate(162.8,266.9)"><path d="M0.5 8 V3 L3 1 L5.5 3 V8 Z" fill="none" stroke="#1d4468" stroke-width="0.8"/><circle cx="7.3" cy="3.5" r="1.3" fill="none" stroke="#1d4468" stroke-width="0.7"/><path d="M7.3 5 V8 M0 8.2 H9" stroke="#1d4468" stroke-width="0.8"/></g><circle cx="242.60000000000002" cy="277.2" r="8.3" fill="#5ea9e2"/><g transform="translate(238.10000000000002,273.2)"><path d="M0.5 8 V3 L3 1 L5.5 3 V8 Z" fill="none" stroke="#1d4468" stroke-width="0.8"/><circle cx="7.3" cy="3.5" r="1.3" fill="none" stroke="#1d4468" stroke-width="0.7"/><path d="M7.3 5 V8 M0 8.2 H9" stroke="#1d4468" stroke-width="0.8"/></g><circle cx="75.5" cy="190.2" r="8" fill="#f3ae3f" stroke="#e7a030" stroke-width="0.6"/><g transform="translate(73.5,186.2)"><circle cx="2" cy="1.2" r="1" fill="none" stroke="#6b4a12" stroke-width="0.6"/><path d="M0.6 7.5 V3.6 Q2 2.4 3.4 3.6 V7.5 Z" fill="none" stroke="#6b4a12" stroke-width="0.6"/></g><circle cx="69" cy="194" r="8" fill="#f3ae3f" stroke="#e7a030" stroke-width="0.6"/><g transform="translate(67,190)"><circle cx="2" cy="1.2" r="1" fill="none" stroke="#6b4a12" stroke-width="0.6"/><path d="M0.6 7.5 V3.6 Q2 2.4 3.4 3.6 V7.5 Z" fill="none" stroke="#6b4a12" stroke-width="0.6"/></g><circle cx="53.5" cy="201" r="9" fill="#f3ae3f" stroke="#e7a030" stroke-width="0.6"/><g transform="translate(51.5,197)"><circle cx="2" cy="1.2" r="1" fill="none" stroke="#6b4a12" stroke-width="0.6"/><path d="M0.6 7.5 V3.6 Q2 2.4 3.4 3.6 V7.5 Z" fill="none" stroke="#6b4a12" stroke-width="0.6"/></g><circle cx="59.10000000000002" cy="201.7" r="9" fill="#f3ae3f" stroke="#e7a030" stroke-width="0.6"/><g transform="translate(57.10000000000002,197.7)"><circle cx="2" cy="1.2" r="1" fill="none" stroke="#6b4a12" stroke-width="0.6"/><path d="M0.6 7.5 V3.6 Q2 2.4 3.4 3.6 V7.5 Z" fill="none" stroke="#6b4a12" stroke-width="0.6"/></g><circle cx="68.39999999999998" cy="202.2" r="8" fill="#f3ae3f" stroke="#e7a030" stroke-width="0.6"/><g transform="translate(66.39999999999998,198.2)"><circle cx="2" cy="1.2" r="1" fill="none" stroke="#6b4a12" stroke-width="0.6"/><path d="M0.6 7.5 V3.6 Q2 2.4 3.4 3.6 V7.5 Z" fill="none" stroke="#6b4a12" stroke-width="0.6"/></g><circle cx="84.80000000000001" cy="208.8" r="8" fill="#f3ae3f" stroke="#e7a030" stroke-width="0.6"/><g transform="translate(82.80000000000001,204.8)"><circle cx="2" cy="1.2" r="1" fill="none" stroke="#6b4a12" stroke-width="0.6"/><path d="M0.6 7.5 V3.6 Q2 2.4 3.4 3.6 V7.5 Z" fill="none" stroke="#6b4a12" stroke-width="0.6"/></g><circle cx="80.39999999999998" cy="216.39999999999998" r="8" fill="#f3ae3f" stroke="#e7a030" stroke-width="0.6"/><g transform="translate(78.39999999999998,212.39999999999998)"><circle cx="2" cy="1.2" r="1" fill="none" stroke="#6b4a12" stroke-width="0.6"/><path d="M0.6 7.5 V3.6 Q2 2.4 3.4 3.6 V7.5 Z" fill="none" stroke="#6b4a12" stroke-width="0.6"/></g><circle cx="59.69999999999999" cy="230.10000000000002" r="8" fill="#f3ae3f" stroke="#e7a030" stroke-width="0.6"/><g transform="translate(57.69999999999999,226.10000000000002)"><circle cx="2" cy="1.2" r="1" fill="none" stroke="#6b4a12" stroke-width="0.6"/><path d="M0.6 7.5 V3.6 Q2 2.4 3.4 3.6 V7.5 Z" fill="none" stroke="#6b4a12" stroke-width="0.6"/></g><circle cx="82.10000000000002" cy="238.3" r="8" fill="#f3ae3f" stroke="#e7a030" stroke-width="0.6"/><g transform="translate(80.10000000000002,234.3)"><circle cx="2" cy="1.2" r="1" fill="none" stroke="#6b4a12" stroke-width="0.6"/><path d="M0.6 7.5 V3.6 Q2 2.4 3.4 3.6 V7.5 Z" fill="none" stroke="#6b4a12" stroke-width="0.6"/></g><text x="179.9" y="83.1" font-size="8.6" font-family="Liberation Sans" fill="#fff" stroke="#fff" stroke-width="1.6" stroke-opacity="0.7" opacity="0.8">Central Bank</text><text x="179.9" y="83.1" font-size="8.6" font-family="Liberation Sans" fill="#2f353d" stroke="#2f353d" stroke-width="0.26">Central Bank</text><text x="197.0" y="99.7" font-size="11.6" font-family="Liberation Sans" fill="#fff" stroke="#fff" stroke-width="1.6" stroke-opacity="0.7" opacity="0.8">Credit Transfer</text><text x="197.0" y="99.7" font-size="11.6" font-family="Liberation Sans" fill="#2f353d" stroke="#2f353d" stroke-width="0.35">Credit Transfer</text><text x="167.0" y="108.6" font-size="10" font-family="Liberation Sans" fill="#fff" stroke="#fff" stroke-width="1.6" stroke-opacity="0.7" opacity="0.8">CBDC</text><text x="167.0" y="108.6" font-size="10" font-family="Liberation Sans" fill="#2f353d" stroke="#2f353d" stroke-width="0.30">CBDC</text><text x="219.4" y="117.2" font-size="8.7" font-family="Liberation Sans" fill="#fff" stroke="#fff" stroke-width="1.6" stroke-opacity="0.7" opacity="0.8">CBDC</text><text x="219.4" y="117.2" font-size="8.7" font-family="Liberation Sans" fill="#2f353d" stroke="#2f353d" stroke-width="0.26">CBDC</text><text x="161.0" y="128.4" font-size="7.9" font-family="Liberation Sans" fill="#fff" stroke="#fff" stroke-width="1.6" stroke-opacity="0.7" opacity="0.8">CBDC</text><text x="161.0" y="128.4" font-size="7.9" font-family="Liberation Sans" fill="#2f353d" stroke="#2f353d" stroke-width="0.24">CBDC</text><text x="193.6" y="130.6" font-size="9.1" font-family="Liberation Sans" fill="#fff" stroke="#fff" stroke-width="1.6" stroke-opacity="0.7" opacity="0.8">CBDC</text><text x="193.6" y="130.6" font-size="9.1" font-family="Liberation Sans" fill="#2f353d" stroke="#2f353d" stroke-width="0.27">CBDC</text><text x="134.3" y="132.8" font-size="4.9" font-family="Liberation Sans" fill="#fff" stroke="#fff" stroke-width="1.6" stroke-opacity="0.7" opacity="0.8">CBDC</text><text x="134.3" y="132.8" font-size="4.9" font-family="Liberation Sans" fill="#555" stroke="#555" stroke-width="0.15">CBDC</text><text x="202.0" y="145.0" font-size="8.2" font-family="Liberation Sans" fill="#fff" stroke="#fff" stroke-width="1.6" stroke-opacity="0.7" opacity="0.8">Retail Bank</text><text x="202.0" y="145.0" font-size="8.2" font-family="Liberation Sans" fill="#2f353d" stroke="#2f353d" stroke-width="0.25">Retail Bank</text><text x="116.3" y="160.2" font-size="7.7" font-family="Liberation Sans" fill="#fff" stroke="#fff" stroke-width="1.6" stroke-opacity="0.7" opacity="0.8">Cash</text><text x="116.3" y="160.2" font-size="7.7" font-family="Liberation Sans" fill="#2f353d" stroke="#2f353d" stroke-width="0.23">Cash</text><text x="155.8" y="160.0" font-size="7.3" font-family="Liberation Sans" fill="#fff" stroke="#fff" stroke-width="1.6" stroke-opacity="0.7" opacity="0.8">CBDC</text><text x="155.8" y="160.0" font-size="7.3" font-family="Liberation Sans" fill="#2f353d" stroke="#2f353d" stroke-width="0.22">CBDC</text><text x="96.3" y="178.3" font-size="7.6" font-family="Liberation Sans" fill="#fff" stroke="#fff" stroke-width="1.6" stroke-opacity="0.7" opacity="0.8">CBDC</text><text x="96.3" y="178.3" font-size="7.6" font-family="Liberation Sans" fill="#2f353d" stroke="#2f353d" stroke-width="0.23">CBDC</text><text x="140.0" y="173.5" font-size="4.7" font-family="Liberation Sans" fill="#fff" stroke="#fff" stroke-width="1.6" stroke-opacity="0.7" opacity="0.8">CBDC</text><text x="140.0" y="173.5" font-size="4.7" font-family="Liberation Sans" fill="#555" stroke="#555" stroke-width="0.14">CBDC</text><text x="176.6" y="175.6" font-size="9.9" font-family="Liberation Sans" fill="#fff" stroke="#fff" stroke-width="1.6" stroke-opacity="0.7" opacity="0.8">Credit Transfer</text><text x="176.6" y="175.6" font-size="9.9" font-family="Liberation Sans" fill="#2f353d" stroke="#2f353d" stroke-width="0.30">Credit Transfer</text><text x="182.3" y="180.5" font-size="8.1" font-family="Liberation Sans" fill="#fff" stroke="#fff" stroke-width="1.6" stroke-opacity="0.7" opacity="0.8">Fintech</text><text x="182.3" y="180.5" font-size="8.1" font-family="Liberation Sans" fill="#2f353d" stroke="#2f353d" stroke-width="0.24">Fintech</text><text x="5.2" y="192.0" font-size="8.34" font-family="Liberation Sans" fill="#fff" stroke="#fff" stroke-width="1.6" stroke-opacity="0.7" opacity="0.8">Persona Type 1</text><text x="5.2" y="192.0" font-size="8.34" font-family="Liberation Sans" fill="#2f353d" stroke="#2f353d" stroke-width="0.25">Persona Type 1</text><text x="109.7" y="192.8" font-size="8.3" font-family="Liberation Sans" fill="#fff" stroke="#fff" stroke-width="1.6" stroke-opacity="0.7" opacity="0.8">CBDC</text><text x="109.7" y="192.8" font-size="8.3" font-family="Liberation Sans" fill="#2f353d" stroke="#2f353d" stroke-width="0.25">CBDC</text><text x="153.4" y="194.8" font-size="8.57" font-family="Liberation Sans" fill="#fff" stroke="#fff" stroke-width="1.6" stroke-opacity="0.7" opacity="0.8">Commercial Bank</text><text x="153.4" y="194.8" font-size="8.57" font-family="Liberation Sans" fill="#2f353d" stroke="#2f353d" stroke-width="0.26">Commercial Bank</text><text x="72.2" y="203.2" font-size="8.45" font-family="Liberation Sans" fill="#fff" stroke="#fff" stroke-width="1.6" stroke-opacity="0.7" opacity="0.8">Persona Type 2</text><text x="72.2" y="203.2" font-size="8.45" font-family="Liberation Sans" fill="#2f353d" stroke="#2f353d" stroke-width="0.25">Persona Type 2</text><text x="171.0" y="207.9" font-size="9.7" font-family="Liberation Sans" fill="#fff" stroke="#fff" stroke-width="1.6" stroke-opacity="0.7" opacity="0.8">CBDC</text><text x="171.0" y="207.9" font-size="9.7" font-family="Liberation Sans" fill="#2f353d" stroke="#2f353d" stroke-width="0.29">CBDC</text><text x="102.8" y="213.2" font-size="10.1" font-family="Liberation Sans" fill="#fff" stroke="#fff" stroke-width="1.6" stroke-opacity="0.7" opacity="0.8">CBDC</text><text x="102.8" y="213.2" font-size="10.1" font-family="Liberation Sans" fill="#2f353d" stroke="#2f353d" stroke-width="0.30">CBDC</text><text x="141.0" y="211.5" font-size="5.2" font-family="Liberation Sans" fill="#fff" stroke="#fff" stroke-width="1.6" stroke-opacity="0.7" opacity="0.8">CBDC</text><text x="141.0" y="211.5" font-size="5.2" font-family="Liberation Sans" fill="#555" stroke="#555" stroke-width="0.16">CBDC</text><text x="205.5" y="213.2" font-size="9.0" font-family="Liberation Sans" fill="#fff" stroke="#fff" stroke-width="1.6" stroke-opacity="0.7" opacity="0.8">Cash</text><text x="205.5" y="213.2" font-size="9.0" font-family="Liberation Sans" fill="#2f353d" stroke="#2f353d" stroke-width="0.27">Cash</text><text x="10.3" y="216.9" font-size="8.35" font-family="Liberation Sans" fill="#fff" stroke="#fff" stroke-width="1.6" stroke-opacity="0.7" opacity="0.8">Persona Type 4</text><text x="10.3" y="216.9" font-size="8.35" font-family="Liberation Sans" fill="#2f353d" stroke="#2f353d" stroke-width="0.25">Persona Type 4</text><text x="150.4" y="228.6" font-size="7.6" font-family="Liberation Sans" fill="#fff" stroke="#fff" stroke-width="1.6" stroke-opacity="0.7" opacity="0.8">CBDC</text><text x="150.4" y="228.6" font-size="7.6" font-family="Liberation Sans" fill="#2f353d" stroke="#2f353d" stroke-width="0.23">CBDC</text><text x="72.2" y="232.7" font-size="8.34" font-family="Liberation Sans" fill="#fff" stroke="#fff" stroke-width="1.6" stroke-opacity="0.7" opacity="0.8">Persona Type 5</text><text x="72.2" y="232.7" font-size="8.34" font-family="Liberation Sans" fill="#2f353d" stroke="#2f353d" stroke-width="0.25">Persona Type 5</text><text x="216.0" y="235.3" font-size="8.7" font-family="Liberation Sans" fill="#fff" stroke="#fff" stroke-width="1.6" stroke-opacity="0.7" opacity="0.8">Merchant Type 2</text><text x="216.0" y="235.3" font-size="8.7" font-family="Liberation Sans" fill="#2f353d" stroke="#2f353d" stroke-width="0.26">Merchant Type 2</text><text x="12.4" y="238.4" font-size="8.34" font-family="Liberation Sans" fill="#fff" stroke="#fff" stroke-width="1.6" stroke-opacity="0.7" opacity="0.8">Persona Type 8</text><text x="12.4" y="238.4" font-size="8.34" font-family="Liberation Sans" fill="#2f353d" stroke="#2f353d" stroke-width="0.25">Persona Type 8</text><text x="95.4" y="246.6" font-size="6.3" font-family="Liberation Sans" fill="#fff" stroke="#fff" stroke-width="1.6" stroke-opacity="0.7" opacity="0.8">Debit Card</text><text x="95.4" y="246.6" font-size="6.3" font-family="Liberation Sans" fill="#444" stroke="#444" stroke-width="0.19">Debit Card</text><text x="148.4" y="257.3" font-size="9.2" font-family="Liberation Sans" fill="#fff" stroke="#fff" stroke-width="1.6" stroke-opacity="0.7" opacity="0.8">CBDC</text><text x="148.4" y="257.3" font-size="9.2" font-family="Liberation Sans" fill="#2f353d" stroke="#2f353d" stroke-width="0.28">CBDC</text><text x="215.2" y="256.1" font-size="5.7" font-family="Liberation Sans" fill="#fff" stroke="#fff" stroke-width="1.6" stroke-opacity="0.7" opacity="0.8">CBDC</text><text x="215.2" y="256.1" font-size="5.7" font-family="Liberation Sans" fill="#555" stroke="#555" stroke-width="0.17">CBDC</text><text x="180.7" y="271.8" font-size="8.69" font-family="Liberation Sans" fill="#fff" stroke="#fff" stroke-width="1.6" stroke-opacity="0.7" opacity="0.8">Merchant Type 3</text><text x="180.7" y="271.8" font-size="8.69" font-family="Liberation Sans" fill="#2f353d" stroke="#2f353d" stroke-width="0.26">Merchant Type 3</text><text x="196.9" y="280.5" font-size="7.2" font-family="Liberation Sans" fill="#fff" stroke="#fff" stroke-width="1.6" stroke-opacity="0.7" opacity="0.8">CBDC</text><text x="196.9" y="280.5" font-size="7.2" font-family="Liberation Sans" fill="#2f353d" stroke="#2f353d" stroke-width="0.22">CBDC</text></svg>
<div class="b" style="left:527px;top:189px;width:304px;height:446px;background:#fff;border:1px solid #e6eaef;border-radius:2px;box-sizing:border-box"></div>
<div class="t" style="left:534.5px;top:195.40px;line-height:12px;font-size:7.0px;font-weight:normal;color:#3a414b;">Trends</div>
<svg class="b" style="left:783.8px;top:195.5px;" width="10" height="10" viewBox="0 0 10 10"><path d="M3 7 L7 3" stroke="#666" stroke-width="0.7"/><path d="M5.2 1.6 L8.4 1.6 L8.4 4.8 Z" fill="#222"/><path d="M1.6 5.2 L1.6 8.4 L4.8 8.4 Z" fill="#222"/></svg>
<svg class="b" style="left:807.5px;top:198.3px;" width="10" height="4" viewBox="0 0 10 4"><rect x="1.60" y="1.1" width="1.8" height="1.8" fill="#222"/><rect x="4.85" y="1.1" width="1.8" height="1.8" fill="#222"/><rect x="8.10" y="1.1" width="1.8" height="1.8" fill="#222"/></svg>
<div class="b" style="left:534.5px;top:213px;width:289.0px;height:1px;background:#e4e8ed"></div>
<div class="t" style="left:534.5px;top:218.60px;line-height:12px;font-size:6.4px;font-weight:normal;color:#3b79c9;">Nodes</div>
<div class="t" style="left:563px;top:218.60px;line-height:12px;font-size:6.45px;font-weight:normal;color:#3a414b;">Links</div>
<div class="b" style="left:534.5px;top:234.3px;width:289.0px;height:1.0px;background:#e6eaee"></div>
<div class="b" style="left:534.5px;top:233px;width:18.700000000000045px;height:2.3000000000000114px;background:#3b79c9"></div>
<div class="t" style="left:534.5px;top:244.50px;line-height:12px;font-size:7.0px;font-weight:normal;color:#5d646d;">Showing trends for</div>
<div class="b" style="left:596.4px;top:241.6px;width:63.700000000000045px;height:16.400000000000006px;background:#fff;border:1px solid #e7eaee;box-sizing:border-box;border-radius:2px"></div>
<div class="t" style="left:601px;top:244.50px;line-height:12px;font-size:6.42px;font-weight:bold;color:#3a414b;">CBDC_balance</div>
<svg class="b" style="left:650.25px;top:247.05px;" width="6.5" height="6.5" viewBox="0 0 6.5 6.5"><path d="M1 2.3499999999999996 L3.25 4.375 L5.5 2.3499999999999996" fill="none" stroke="#666" stroke-width="0.9"/></svg>
<div class="t" style="right:322.79999999999995px;top:244.50px;line-height:12px;font-size:6.6px;font-weight:bold;color:#3a414b;">1 — 17 of 17</div>
<div class="b" style="left:534.5px;top:265px;width:289.0px;height:1px;background:#e4e8ed"></div>
<div class="t" style="left:537.9px;top:267.90px;line-height:12px;font-size:7.1px;font-weight:normal;color:#3a414b;">Node label</div>
<div class="t" style="right:457.29999999999995px;top:267.90px;line-height:12px;font-size:6.6px;font-weight:normal;color:#5d646d;">CBDC_balance <span style="color:#8a9098">(latest)</span></div>
<div class="t" style="left:701px;top:267.90px;line-height:12px;font-size:7.2px;font-weight:normal;color:#3a414b;">Trend</div>
<div class="t" style="left:743.3px;top:267.90px;line-height:12px;font-size:6.4px;font-weight:bold;color:#3a414b;">Change</div>
<svg class="b" style="left:770.5px;top:268.5px;" width="8" height="9" viewBox="0 0 8 9"><path d="M2.5 1 V7.5 M1 6 L2.5 7.8 L4 6" fill="none" stroke="#777" stroke-width="0.7"/><path d="M5.5 1.5 H7.5 M5.5 3.5 H7 M5.5 5.5 H6.5" stroke="#aaa" stroke-width="0.6"/></svg>
<div class="t" style="right:322.5px;top:267.90px;line-height:12px;font-size:6.75px;font-weight:normal;color:#3a414b;">% Change</div>
<div class="b" style="left:534.5px;top:281.5px;width:289.0px;height:1.0px;background:#e4e8ed"></div>
<div class="t" style="left:538px;top:288.00px;line-height:12px;font-size:6.9px;font-weight:normal;color:#4a525c;">Merchant Type 1</div>
<div class="t" style="right:457px;top:288.00px;line-height:12px;font-size:7.0px;font-weight:normal;color:#4a525c;">36</div>
<div class="t" style="right:372.5px;top:288.00px;line-height:12px;font-size:6.9px;font-weight:normal;color:#4e9a3a;">+33</div>
<div class="t" style="right:322.79999999999995px;top:288.00px;line-height:12px;font-size:6.9px;font-weight:normal;color:#4e9a3a;">+1,100</div>
<div class="b" style="left:534.5px;top:304.3px;width:287.5px;height:1.0px;background:#eef1f4"></div>
<svg class="b" style="left:695px;top:281.5px;" width="46" height="24" viewBox="0 0 46 24"><path d="M6.0 12.8 L7.2 10.9 L8.5 4.5 L9.7 12.6 L11.0 11.9 L12.2 10.5 L13.4 17.5 L14.7 11.8 L15.9 9.7 L17.2 6.8 L18.4 19.1 L19.6 15.5 L20.9 19.2 L22.1 6.6 L23.4 8.6 L24.6 20.1 L25.9 3.5 L27.1 3.8 L28.3 9.3 L29.6 10.0 L30.8 18.0 L32.1 20.5 L33.3 11.5 L34.5 19.8 L35.8 17.5 L37.0 16.5 L38.3 20.3 L39.5 12.6" fill="none" stroke="#2f5fb3" stroke-width="0.8"/><circle cx="25.9" cy="3.5" r="1.6" fill="#fff" stroke="#2f5fb3" stroke-width="0.7"/><circle cx="32.1" cy="20.5" r="1.6" fill="#fff" stroke="#2f5fb3" stroke-width="0.7"/><circle cx="39.5" cy="12.6" r="1.2" fill="#1d3f80"/></svg>
<div class="t" style="left:538px;top:310.68px;line-height:12px;font-size:6.9px;font-weight:normal;color:#4a525c;">Merchant Type 3</div>
<div class="t" style="right:457px;top:310.68px;line-height:12px;font-size:7.0px;font-weight:normal;color:#4a525c;">37</div>
<div class="t" style="right:372.5px;top:310.68px;line-height:12px;font-size:6.9px;font-weight:normal;color:#4e9a3a;">+22</div>
<div class="t" style="right:322.79999999999995px;top:310.68px;line-height:12px;font-size:6.9px;font-weight:normal;color:#4e9a3a;">+146.67</div>
<div class="b" style="left:534.5px;top:326.98px;width:287.5px;height:1.0px;background:#eef1f4"></div>
<svg class="b" style="left:695px;top:304.18px;" width="46" height="24" viewBox="0 0 46 24"><path d="M6.0 13.0 L7.2 6.0 L8.5 11.7 L9.7 9.5 L11.0 12.0 L12.2 9.1 L13.4 12.8 L14.7 15.9 L15.9 3.2 L17.2 3.3 L18.4 6.0 L19.6 8.3 L20.9 15.3 L22.1 16.8 L23.4 15.7 L24.6 19.6 L25.9 7.3 L27.1 13.8 L28.3 5.9 L29.6 14.0 L30.8 3.9 L32.1 5.9 L33.3 20.8 L34.5 17.1 L35.8 4.8 L37.0 12.5 L38.3 3.5 L39.5 13.8" fill="none" stroke="#2f5fb3" stroke-width="0.8"/><circle cx="15.9" cy="3.2" r="1.6" fill="#fff" stroke="#2f5fb3" stroke-width="0.7"/><circle cx="33.3" cy="20.8" r="1.6" fill="#fff" stroke="#2f5fb3" stroke-width="0.7"/><circle cx="39.5" cy="13.8" r="1.2" fill="#1d3f80"/></svg>
<div class="t" style="left:538px;top:333.36px;line-height:12px;font-size:6.9px;font-weight:normal;color:#4a525c;">Persona Type 8</div>
<div class="t" style="right:457px;top:333.36px;line-height:12px;font-size:7.0px;font-weight:normal;color:#4a525c;">18</div>
<div class="t" style="right:372.5px;top:333.36px;line-height:12px;font-size:6.9px;font-weight:normal;color:#4e9a3a;">+17</div>
<div class="t" style="right:322.79999999999995px;top:333.36px;line-height:12px;font-size:6.9px;font-weight:normal;color:#4e9a3a;">+1,700</div>
<div class="b" style="left:534.5px;top:349.66px;width:287.5px;height:1.0px;background:#eef1f4"></div>
<svg class="b" style="left:695px;top:326.86px;" width="46" height="24" viewBox="0 0 46 24"><path d="M6.0 19.5 L7.2 9.7 L8.5 7.1 L9.7 16.1 L11.0 19.3 L12.2 14.9 L13.4 3.8 L14.7 7.5 L15.9 18.7 L17.2 16.5 L18.4 19.0 L19.6 19.7 L20.9 6.8 L22.1 17.7 L23.4 11.0 L24.6 12.9 L25.9 17.4 L27.1 7.9 L28.3 18.5 L29.6 9.5 L30.8 18.7 L32.1 13.4 L33.3 17.1 L34.5 16.1 L35.8 3.7 L37.0 6.7 L38.3 15.4 L39.5 5.2" fill="none" stroke="#2f5fb3" stroke-width="0.8"/><circle cx="35.8" cy="3.7" r="1.6" fill="#fff" stroke="#2f5fb3" stroke-width="0.7"/><circle cx="19.6" cy="19.7" r="1.6" fill="#fff" stroke="#2f5fb3" stroke-width="0.7"/><circle cx="39.5" cy="5.2" r="1.2" fill="#1d3f80"/></svg>
<div class="t" style="left:538px;top:356.04px;line-height:12px;font-size:6.9px;font-weight:normal;color:#4a525c;">Persona Type 10</div>
<div class="t" style="right:457px;top:356.04px;line-height:12px;font-size:7.0px;font-weight:normal;color:#4a525c;">12</div>
<div class="t" style="right:372.5px;top:356.04px;line-height:12px;font-size:6.9px;font-weight:normal;color:#4e9a3a;">+11</div>
<div class="t" style="right:322.79999999999995px;top:356.04px;line-height:12px;font-size:6.9px;font-weight:normal;color:#4e9a3a;">+1,100</div>
<div class="b" style="left:534.5px;top:372.34px;width:287.5px;height:1.0px;background:#eef1f4"></div>
<svg class="b" style="left:695px;top:349.53999999999996px;" width="46" height="24" viewBox="0 0 46 24"><path d="M6.0 17.1 L7.2 13.9 L8.5 5.8 L9.7 9.5 L11.0 19.0 L12.2 3.4 L13.4 17.0 L14.7 16.3 L15.9 7.2 L17.2 15.0 L18.4 15.6 L19.6 19.5 L20.9 19.2 L22.1 10.5 L23.4 16.5 L24.6 10.2 L25.9 14.3 L27.1 12.8 L28.3 3.9 L29.6 12.3 L30.8 10.7 L32.1 5.5 L33.3 17.6 L34.5 18.1 L35.8 4.8 L37.0 6.4 L38.3 16.4 L39.5 17.5" fill="none" stroke="#2f5fb3" stroke-width="0.8"/><circle cx="12.2" cy="3.4" r="1.6" fill="#fff" stroke="#2f5fb3" stroke-width="0.7"/><circle cx="19.6" cy="19.5" r="1.6" fill="#fff" stroke="#2f5fb3" stroke-width="0.7"/><circle cx="39.5" cy="17.5" r="1.2" fill="#1d3f80"/></svg>
<div class="t" style="left:538px;top:378.72px;line-height:12px;font-size:6.9px;font-weight:normal;color:#4a525c;">Persona Type 2</div>
<div class="t" style="right:457px;top:378.72px;line-height:12px;font-size:7.0px;font-weight:normal;color:#4a525c;">50</div>
<div class="t" style="right:372.5px;top:378.72px;line-height:12px;font-size:6.9px;font-weight:normal;color:#4e9a3a;">+10</div>
<div class="t" style="right:322.79999999999995px;top:378.72px;line-height:12px;font-size:6.9px;font-weight:normal;color:#4e9a3a;">+25</div>
<div class="b" style="left:534.5px;top:395.02000000000004px;width:287.5px;height:1.0px;background:#eef1f4"></div>
<svg class="b" style="left:695px;top:372.22px;" width="46" height="24" viewBox="0 0 46 24"><path d="M6.0 7.8 L7.2 4.2 L8.5 17.3 L9.7 4.1 L11.0 5.3 L12.2 10.2 L13.4 13.4 L14.7 19.0 L15.9 20.1 L17.2 3.9 L18.4 16.6 L19.6 8.4 L20.9 16.3 L22.1 6.3 L23.4 10.3 L24.6 15.6 L25.9 17.7 L27.1 8.1 L28.3 19.6 L29.6 16.8 L30.8 11.0 L32.1 5.8 L33.3 10.0 L34.5 15.9 L35.8 4.7 L37.0 17.2 L38.3 20.5 L39.5 16.1" fill="none" stroke="#2f5fb3" stroke-width="0.8"/><circle cx="17.2" cy="3.9" r="1.6" fill="#fff" stroke="#2f5fb3" stroke-width="0.7"/><circle cx="38.3" cy="20.5" r="1.6" fill="#fff" stroke="#2f5fb3" stroke-width="0.7"/><circle cx="39.5" cy="16.1" r="1.2" fill="#1d3f80"/></svg>
<div class="t" style="left:538px;top:401.40px;line-height:12px;font-size:6.9px;font-weight:normal;color:#4a525c;">Commercial Bank</div>
<div class="t" style="right:457px;top:401.40px;line-height:12px;font-size:7.0px;font-weight:normal;color:#4a525c;">22</div>
<div class="t" style="right:372.5px;top:401.40px;line-height:12px;font-size:6.9px;font-weight:normal;color:#4e9a3a;">+4</div>
<div class="t" style="right:322.79999999999995px;top:401.40px;line-height:12px;font-size:6.9px;font-weight:normal;color:#4e9a3a;">+22.22</div>
<div class="b" style="left:534.5px;top:417.7px;width:287.5px;height:1.0px;background:#eef1f4"></div>
<svg class="b" style="left:695px;top:394.9px;" width="46" height="24" viewBox="0 0 46 24"><path d="M6.0 13.0 L7.2 19.7 L8.5 17.7 L9.7 14.3 L11.0 10.7 L12.2 18.5 L13.4 14.4 L14.7 5.1 L15.9 3.5 L17.2 9.2 L18.4 8.6 L19.6 10.5 L20.9 18.3 L22.1 20.2 L23.4 20.5 L24.6 4.8 L25.9 8.5 L27.1 3.9 L28.3 20.4 L29.6 9.6 L30.8 12.3 L32.1 7.9 L33.3 15.2 L34.5 3.2 L35.8 19.5 L37.0 11.2 L38.3 7.8 L39.5 5.0" fill="none" stroke="#2f5fb3" stroke-width="0.8"/><circle cx="34.5" cy="3.2" r="1.6" fill="#fff" stroke="#2f5fb3" stroke-width="0.7"/><circle cx="23.4" cy="20.5" r="1.6" fill="#fff" stroke="#2f5fb3" stroke-width="0.7"/><circle cx="39.5" cy="5.0" r="1.2" fill="#1d3f80"/></svg>
<div class="b" style="left:535px;top:418.28px;width:287px;height:22.69999999999999px;background:#e4effb"></div>
<div class="t" style="left:538px;top:424.08px;line-height:12px;font-size:6.9px;font-weight:normal;color:#4a525c;">Central Bank</div>
<div class="t" style="right:457px;top:424.08px;line-height:12px;font-size:7.0px;font-weight:normal;color:#4a525c;">26</div>
<div class="t" style="right:372.5px;top:424.08px;line-height:12px;font-size:6.9px;font-weight:normal;color:#4e9a3a;">+2</div>
<div class="t" style="right:322.79999999999995px;top:424.08px;line-height:12px;font-size:6.9px;font-weight:normal;color:#4e9a3a;">+8.33</div>
<div class="b" style="left:534.5px;top:440.38px;width:287.5px;height:1.0px;background:#eef1f4"></div>
<svg class="b" style="left:695px;top:417.58px;" width="46" height="24" viewBox="0 0 46 24"><path d="M6.0 7.8 L7.2 8.4 L8.5 6.8 L9.7 4.7 L11.0 14.6 L12.2 8.7 L13.4 4.9 L14.7 5.5 L15.9 13.5 L17.2 6.9 L18.4 5.6 L19.6 10.7 L20.9 9.8 L22.1 14.1 L23.4 10.5 L24.6 10.1 L25.9 19.4 L27.1 9.5 L28.3 3.3 L29.6 5.3 L30.8 8.0 L32.1 14.0 L33.3 7.9 L34.5 10.6 L35.8 13.0 L37.0 6.0 L38.3 19.3 L39.5 7.6" fill="none" stroke="#2f5fb3" stroke-width="0.8"/><circle cx="28.3" cy="3.3" r="1.6" fill="#fff" stroke="#2f5fb3" stroke-width="0.7"/><circle cx="25.9" cy="19.4" r="1.6" fill="#fff" stroke="#2f5fb3" stroke-width="0.7"/><circle cx="39.5" cy="7.6" r="1.2" fill="#1d3f80"/></svg>
<div class="t" style="left:538px;top:446.76px;line-height:12px;font-size:6.9px;font-weight:normal;color:#4a525c;">Persona Type 3</div>
<div class="t" style="right:457px;top:446.76px;line-height:12px;font-size:7.0px;font-weight:normal;color:#4a525c;">28</div>
<div class="t" style="right:372.5px;top:446.76px;line-height:12px;font-size:6.9px;font-weight:normal;color:#4e9a3a;">+2</div>
<div class="t" style="right:322.79999999999995px;top:446.76px;line-height:12px;font-size:6.9px;font-weight:normal;color:#4e9a3a;">+7.69</div>
<div class="b" style="left:534.5px;top:463.06px;width:287.5px;height:1.0px;background:#eef1f4"></div>
<svg class="b" style="left:695px;top:440.26px;" width="46" height="24" viewBox="0 0 46 24"><path d="M6.0 20.3 L7.2 10.2 L8.5 12.3 L9.7 16.7 L11.0 8.5 L12.2 12.0 L13.4 10.0 L14.7 4.6 L15.9 16.3 L17.2 20.6 L18.4 15.5 L19.6 8.9 L20.9 17.2 L22.1 17.8 L23.4 4.9 L24.6 9.2 L25.9 13.0 L27.1 5.1 L28.3 15.0 L29.6 9.1 L30.8 17.3 L32.1 13.2 L33.3 6.6 L34.5 4.7 L35.8 5.3 L37.0 14.0 L38.3 10.5 L39.5 15.2" fill="none" stroke="#2f5fb3" stroke-width="0.8"/><circle cx="14.7" cy="4.6" r="1.6" fill="#fff" stroke="#2f5fb3" stroke-width="0.7"/><circle cx="17.2" cy="20.6" r="1.6" fill="#fff" stroke="#2f5fb3" stroke-width="0.7"/><circle cx="39.5" cy="15.2" r="1.2" fill="#1d3f80"/></svg>
<div class="t" style="left:538px;top:469.44px;line-height:12px;font-size:6.9px;font-weight:normal;color:#4a525c;">Persona Type 1</div>
<div class="t" style="right:457px;top:469.44px;line-height:12px;font-size:7.0px;font-weight:normal;color:#4a525c;">17</div>
<div class="t" style="right:372.5px;top:469.44px;line-height:12px;font-size:6.9px;font-weight:normal;color:#e0453a;">-1</div>
<div class="t" style="right:322.79999999999995px;top:469.44px;line-height:12px;font-size:6.9px;font-weight:normal;color:#e0453a;">-5.56</div>
<div class="b" style="left:534.5px;top:485.74px;width:287.5px;height:1.0px;background:#eef1f4"></div>
<svg class="b" style="left:695px;top:462.94px;" width="46" height="24" viewBox="0 0 46 24"><path d="M6.0 18.4 L7.2 12.1 L8.5 6.1 L9.7 5.9 L11.0 8.3 L12.2 4.1 L13.4 15.9 L14.7 17.8 L15.9 12.9 L17.2 16.0 L18.4 17.0 L19.6 13.5 L20.9 9.8 L22.1 12.1 L23.4 15.2 L24.6 6.0 L25.9 3.5 L27.1 12.8 L28.3 19.5 L29.6 20.2 L30.8 5.4 L32.1 20.1 L33.3 8.3 L34.5 10.8 L35.8 15.4 L37.0 6.9 L38.3 20.5 L39.5 18.4" fill="none" stroke="#2f5fb3" stroke-width="0.8"/><circle cx="25.9" cy="3.5" r="1.6" fill="#fff" stroke="#2f5fb3" stroke-width="0.7"/><circle cx="38.3" cy="20.5" r="1.6" fill="#fff" stroke="#2f5fb3" stroke-width="0.7"/><circle cx="39.5" cy="18.4" r="1.2" fill="#1d3f80"/></svg>
<div class="t" style="left:538px;top:492.12px;line-height:12px;font-size:6.9px;font-weight:normal;color:#4a525c;">Merchant Type 2</div>
<div class="t" style="right:457px;top:492.12px;line-height:12px;font-size:7.0px;font-weight:normal;color:#4a525c;">6</div>
<div class="t" style="right:372.5px;top:492.12px;line-height:12px;font-size:6.9px;font-weight:normal;color:#e0453a;">-4</div>
<div class="t" style="right:322.79999999999995px;top:492.12px;line-height:12px;font-size:6.9px;font-weight:normal;color:#e0453a;">-40</div>
<div class="b" style="left:534.5px;top:508.42px;width:287.5px;height:1.0px;background:#eef1f4"></div>
<svg class="b" style="left:695px;top:485.62px;" width="46" height="24" viewBox="0 0 46 24"><path d="M6.0 12.8 L7.2 20.4 L8.5 6.2 L9.7 16.6 L11.0 18.3 L12.2 20.0 L13.4 9.7 L14.7 12.9 L15.9 9.7 L17.2 9.3 L18.4 6.6 L19.6 3.9 L20.9 8.8 L22.1 17.3 L23.4 12.4 L24.6 17.7 L25.9 20.6 L27.1 12.5 L28.3 8.2 L29.6 17.6 L30.8 16.0 L32.1 14.7 L33.3 8.5 L34.5 11.6 L35.8 10.0 L37.0 7.5 L38.3 13.9 L39.5 6.9" fill="none" stroke="#2f5fb3" stroke-width="0.8"/><circle cx="19.6" cy="3.9" r="1.6" fill="#fff" stroke="#2f5fb3" stroke-width="0.7"/><circle cx="25.9" cy="20.6" r="1.6" fill="#fff" stroke="#2f5fb3" stroke-width="0.7"/><circle cx="39.5" cy="6.9" r="1.2" fill="#1d3f80"/></svg>
<div class="t" style="left:538px;top:514.80px;line-height:12px;font-size:6.9px;font-weight:normal;color:#4a525c;">Fintech</div>
<div class="t" style="right:457px;top:514.80px;line-height:12px;font-size:7.0px;font-weight:normal;color:#4a525c;">8</div>
<div class="t" style="right:372.5px;top:514.80px;line-height:12px;font-size:6.9px;font-weight:normal;color:#e0453a;">-7</div>
<div class="t" style="right:322.79999999999995px;top:514.80px;line-height:12px;font-size:6.9px;font-weight:normal;color:#e0453a;">-46.67</div>
<div class="b" style="left:534.5px;top:531.0999999999999px;width:287.5px;height:1.0px;background:#eef1f4"></div>
<svg class="b" style="left:695px;top:508.29999999999995px;" width="46" height="24" viewBox="0 0 46 24"><path d="M6.0 4.9 L7.2 19.3 L8.5 4.4 L9.7 8.1 L11.0 18.5 L12.2 12.8 L13.4 9.8 L14.7 4.8 L15.9 14.2 L17.2 10.8 L18.4 5.3 L19.6 6.8 L20.9 4.2 L22.1 12.6 L23.4 9.3 L24.6 17.2 L25.9 8.1 L27.1 6.4 L28.3 9.5 L29.6 8.2 L30.8 17.0 L32.1 5.0 L33.3 3.5 L34.5 3.6 L35.8 11.3 L37.0 6.9 L38.3 15.2 L39.5 4.8" fill="none" stroke="#2f5fb3" stroke-width="0.8"/><circle cx="33.3" cy="3.5" r="1.6" fill="#fff" stroke="#2f5fb3" stroke-width="0.7"/><circle cx="7.2" cy="19.3" r="1.6" fill="#fff" stroke="#2f5fb3" stroke-width="0.7"/><circle cx="39.5" cy="4.8" r="1.2" fill="#1d3f80"/></svg>
<div class="t" style="left:538px;top:537.48px;line-height:12px;font-size:6.9px;font-weight:normal;color:#4a525c;">Persona Type 5</div>
<div class="t" style="right:457px;top:537.48px;line-height:12px;font-size:7.0px;font-weight:normal;color:#4a525c;">22</div>
<div class="t" style="right:372.5px;top:537.48px;line-height:12px;font-size:6.9px;font-weight:normal;color:#e0453a;">-18</div>
<div class="t" style="right:322.79999999999995px;top:537.48px;line-height:12px;font-size:6.9px;font-weight:normal;color:#e0453a;">-45</div>
<div class="b" style="left:534.5px;top:553.78px;width:287.5px;height:1.0px;background:#eef1f4"></div>
<svg class="b" style="left:695px;top:530.98px;" width="46" height="24" viewBox="0 0 46 24"><path d="M6.0 5.7 L7.2 14.7 L8.5 19.3 L9.7 13.0 L11.0 11.1 L12.2 7.3 L13.4 12.2 L14.7 20.3 L15.9 6.6 L17.2 19.7 L18.4 6.7 L19.6 17.8 L20.9 14.9 L22.1 6.9 L23.4 18.3 L24.6 18.2 L25.9 11.7 L27.1 8.1 L28.3 6.0 L29.6 8.7 L30.8 4.2 L32.1 12.1 L33.3 4.1 L34.5 19.3 L35.8 16.9 L37.0 11.5 L38.3 15.7 L39.5 8.0" fill="none" stroke="#2f5fb3" stroke-width="0.8"/><circle cx="33.3" cy="4.1" r="1.6" fill="#fff" stroke="#2f5fb3" stroke-width="0.7"/><circle cx="14.7" cy="20.3" r="1.6" fill="#fff" stroke="#2f5fb3" stroke-width="0.7"/><circle cx="39.5" cy="8.0" r="1.2" fill="#1d3f80"/></svg>
<div class="t" style="left:538px;top:560.16px;line-height:12px;font-size:6.9px;font-weight:normal;color:#4a525c;">Persona Type 4</div>
<div class="t" style="right:457px;top:560.16px;line-height:12px;font-size:7.0px;font-weight:normal;color:#4a525c;">17</div>
<div class="t" style="right:372.5px;top:560.16px;line-height:12px;font-size:6.9px;font-weight:normal;color:#e0453a;">-23</div>
<div class="t" style="right:322.79999999999995px;top:560.16px;line-height:12px;font-size:6.9px;font-weight:normal;color:#e0453a;">-57.5</div>
<div class="b" style="left:534.5px;top:576.4599999999999px;width:287.5px;height:1.0px;background:#eef1f4"></div>
<svg class="b" style="left:695px;top:553.66px;" width="46" height="24" viewBox="0 0 46 24"><path d="M6.0 9.6 L7.2 11.6 L8.5 6.0 L9.7 10.9 L11.0 15.3 L12.2 14.1 L13.4 5.9 L14.7 5.0 L15.9 17.1 L17.2 5.8 L18.4 3.8 L19.6 11.6 L20.9 10.7 L22.1 17.3 L23.4 11.4 L24.6 11.9 L25.9 10.1 L27.1 20.3 L28.3 3.7 L29.6 11.7 L30.8 13.7 L32.1 6.7 L33.3 10.9 L34.5 12.2 L35.8 8.6 L37.0 19.6 L38.3 11.3 L39.5 13.5" fill="none" stroke="#2f5fb3" stroke-width="0.8"/><circle cx="28.3" cy="3.7" r="1.6" fill="#fff" stroke="#2f5fb3" stroke-width="0.7"/><circle cx="27.1" cy="20.3" r="1.6" fill="#fff" stroke="#2f5fb3" stroke-width="0.7"/><circle cx="39.5" cy="13.5" r="1.2" fill="#1d3f80"/></svg>
<div class="t" style="left:538px;top:582.84px;line-height:12px;font-size:6.9px;font-weight:normal;color:#4a525c;">Retail Bank</div>
<div class="t" style="right:457px;top:582.84px;line-height:12px;font-size:7.0px;font-weight:normal;color:#4a525c;">3</div>
<div class="t" style="right:372.5px;top:582.84px;line-height:12px;font-size:6.9px;font-weight:normal;color:#e0453a;">-29</div>
<div class="t" style="right:322.79999999999995px;top:582.84px;line-height:12px;font-size:6.9px;font-weight:normal;color:#e0453a;">-90.62</div>
<div class="b" style="left:534.5px;top:599.1399999999999px;width:287.5px;height:1.0px;background:#eef1f4"></div>
<svg class="b" style="left:695px;top:576.3399999999999px;" width="46" height="24" viewBox="0 0 46 24"><path d="M6.0 4.0 L7.2 4.5 L8.5 16.1 L9.7 12.5 L11.0 18.6 L12.2 13.2 L13.4 6.4 L14.7 5.0 L15.9 12.4 L17.2 15.2 L18.4 17.4 L19.6 9.9 L20.9 4.5 L22.1 18.5 L23.4 7.1 L24.6 20.4 L25.9 17.4 L27.1 16.8 L28.3 8.7 L29.6 15.1 L30.8 14.5 L32.1 9.9 L33.3 19.0 L34.5 7.9 L35.8 18.6 L37.0 11.8 L38.3 16.4 L39.5 17.3" fill="none" stroke="#2f5fb3" stroke-width="0.8"/><circle cx="6.0" cy="4.0" r="1.6" fill="#fff" stroke="#2f5fb3" stroke-width="0.7"/><circle cx="24.6" cy="20.4" r="1.6" fill="#fff" stroke="#2f5fb3" stroke-width="0.7"/><circle cx="39.5" cy="17.3" r="1.2" fill="#1d3f80"/></svg>
<div class="t" style="left:538px;top:605.52px;line-height:12px;font-size:6.9px;font-weight:normal;color:#4a525c;">Persona Type 6</div>
<div class="t" style="right:457px;top:605.52px;line-height:12px;font-size:7.0px;font-weight:normal;color:#4a525c;">10</div>
<div class="t" style="right:372.5px;top:605.52px;line-height:12px;font-size:6.9px;font-weight:normal;color:#e0453a;">-31</div>
<div class="t" style="right:322.79999999999995px;top:605.52px;line-height:12px;font-size:6.9px;font-weight:normal;color:#e0453a;">-75.61</div>
<div class="b" style="left:534.5px;top:621.8199999999999px;width:287.5px;height:1.0px;background:#eef1f4"></div>
<svg class="b" style="left:695px;top:599.02px;" width="46" height="24" viewBox="0 0 46 24"><path d="M6.0 11.5 L7.2 13.1 L8.5 14.2 L9.7 13.5 L11.0 11.5 L12.2 18.0 L13.4 17.2 L14.7 9.7 L15.9 9.6 L17.2 11.5 L18.4 5.8 L19.6 10.0 L20.9 5.7 L22.1 16.7 L23.4 7.8 L24.6 6.5 L25.9 4.9 L27.1 15.2 L28.3 15.3 L29.6 4.6 L30.8 17.0 L32.1 3.2 L33.3 5.2 L34.5 18.4 L35.8 16.6 L37.0 8.0 L38.3 16.2 L39.5 19.1" fill="none" stroke="#2f5fb3" stroke-width="0.8"/><circle cx="32.1" cy="3.2" r="1.6" fill="#fff" stroke="#2f5fb3" stroke-width="0.7"/><circle cx="39.5" cy="19.1" r="1.6" fill="#fff" stroke="#2f5fb3" stroke-width="0.7"/><circle cx="39.5" cy="19.1" r="1.2" fill="#1d3f80"/></svg>
<div class="b" style="left:822px;top:281.5px;width:1.6000000000000227px;height:344.5px;background:#e3e3e3"></div>
<div class="b" style="left:822px;top:281.5px;width:1.6000000000000227px;height:305.5px;background:#8f8f8f"></div>
<div class="b" style="left:534.5px;top:625px;width:287.5px;height:2px;background:#e3e3e3"></div>
<div class="b" style="left:534.5px;top:625px;width:277.5px;height:2px;background:#9d9d9d"></div>
<div class="b" style="left:821.5px;top:624.5px;width:3.0px;height:3.0px;background:#222"></div>
<div class="b" style="left:838px;top:189px;width:296px;height:446px;background:#fff;border:1px solid #e6eaef;border-radius:2px;box-sizing:border-box"></div>
<div class="t" style="left:845.2px;top:195.20px;line-height:12px;font-size:7.6px;font-weight:normal;color:#3a414b;">Distribution</div>
<svg class="b" style="left:1086.5px;top:195.2px;" width="10" height="10" viewBox="0 0 10 10"><path d="M3 7 L7 3" stroke="#666" stroke-width="0.7"/><path d="M5.2 1.6 L8.4 1.6 L8.4 4.8 Z" fill="#222"/><path d="M1.6 5.2 L1.6 8.4 L4.8 8.4 Z" fill="#222"/></svg>
<svg class="b" style="left:1109.5px;top:198.2px;" width="10" height="4" viewBox="0 0 10 4"><rect x="1.60" y="1.1" width="1.8" height="1.8" fill="#222"/><rect x="4.85" y="1.1" width="1.8" height="1.8" fill="#222"/><rect x="8.10" y="1.1" width="1.8" height="1.8" fill="#222"/></svg>
<div class="b" style="left:845px;top:212.3px;width:282px;height:1.0px;background:#e4e8ed"></div>
<div class="t" style="left:845px;top:218.40px;line-height:12px;font-size:6.4px;font-weight:normal;color:#2f353d;">Nodes</div>
<div class="t" style="left:874.1px;top:218.40px;line-height:12px;font-size:6.45px;font-weight:normal;color:#2f353d;">Links</div>
<div class="t" style="left:899.6px;top:218.40px;line-height:12px;font-size:6.8px;font-weight:normal;color:#3b79c9;">Networks</div>
<div class="b" style="left:845px;top:234.3px;width:282px;height:1.0px;background:#e6eaee"></div>
<div class="b" style="left:899.6px;top:233px;width:28.199999999999932px;height:2.3000000000000114px;background:#3b79c9"></div>
<div class="b" style="left:886.5px;top:248.5px;width:0.7999999999999545px;height:340.5px;background:#e3e7ee"></div>
<svg class="b" style="left:880px;top:240px;" width="250" height="350" viewBox="0 0 250 350"><rect x="8.10" y="329.90" width="17.09" height="18.90" fill="#4a8ddf"/><rect x="25.19" y="329.90" width="1" height="18.90" fill="#8cc4f6"/><rect x="26.19" y="292.10" width="17.09" height="56.70" fill="#4a8ddf"/><rect x="43.28" y="292.10" width="1" height="56.70" fill="#8cc4f6"/><rect x="44.28" y="254.30" width="17.09" height="94.50" fill="#4a8ddf"/><rect x="61.38" y="254.30" width="1" height="94.50" fill="#8cc4f6"/><rect x="62.38" y="254.30" width="17.09" height="94.50" fill="#4a8ddf"/><rect x="79.47" y="254.30" width="1" height="94.50" fill="#8cc4f6"/><rect x="80.47" y="140.90" width="17.09" height="207.90" fill="#4a8ddf"/><rect x="97.56" y="140.90" width="1" height="207.90" fill="#8cc4f6"/><rect x="98.56" y="103.10" width="17.09" height="245.70" fill="#4a8ddf"/><rect x="115.65" y="103.10" width="1" height="245.70" fill="#8cc4f6"/><rect x="116.65" y="65.30" width="17.09" height="283.50" fill="#4a8ddf"/><rect x="133.75" y="65.30" width="1" height="283.50" fill="#8cc4f6"/><rect x="134.75" y="65.30" width="17.09" height="283.50" fill="#4a8ddf"/><rect x="151.84" y="65.30" width="1" height="283.50" fill="#8cc4f6"/><rect x="152.84" y="27.50" width="17.09" height="321.30" fill="#4a8ddf"/><rect x="169.93" y="216.50" width="1" height="132.30" fill="#8cc4f6"/><rect x="170.93" y="216.50" width="17.09" height="132.30" fill="#4a8ddf"/><rect x="188.02" y="311.00" width="1" height="37.80" fill="#8cc4f6"/><rect x="189.02" y="311.00" width="17.09" height="37.80" fill="#4a8ddf"/><rect x="206.12" y="311.00" width="1" height="37.80" fill="#8cc4f6"/><rect x="207.12" y="254.30" width="17.09" height="94.50" fill="#4a8ddf"/><rect x="224.21" y="329.90" width="1" height="18.90" fill="#8cc4f6"/><rect x="225.21" y="329.90" width="17.09" height="18.90" fill="#4a8ddf"/></svg>
<div class="t" style="right:262.20000000000005px;top:580.90px;line-height:12px;font-size:6.6px;font-weight:normal;color:#444;letter-spacing:-0.1px">0</div>
<div class="t" style="right:262.20000000000005px;top:543.10px;line-height:12px;font-size:6.6px;font-weight:normal;color:#444;letter-spacing:-0.1px">2</div>
<div class="t" style="right:262.20000000000005px;top:505.30px;line-height:12px;font-size:6.6px;font-weight:normal;color:#444;letter-spacing:-0.1px">4</div>
<div class="t" style="right:262.20000000000005px;top:467.50px;line-height:12px;font-size:6.6px;font-weight:normal;color:#444;letter-spacing:-0.1px">6</div>
<div class="t" style="right:262.20000000000005px;top:429.70px;line-height:12px;font-size:6.6px;font-weight:normal;color:#444;letter-spacing:-0.1px">8</div>
<div class="t" style="right:262.20000000000005px;top:391.90px;line-height:12px;font-size:6.6px;font-weight:normal;color:#444;letter-spacing:-0.1px">10</div>
<div class="t" style="right:262.20000000000005px;top:354.10px;line-height:12px;font-size:6.6px;font-weight:normal;color:#444;letter-spacing:-0.1px">12</div>
<div class="t" style="right:262.20000000000005px;top:316.30px;line-height:12px;font-size:6.6px;font-weight:normal;color:#444;letter-spacing:-0.1px">14</div>
<div class="t" style="right:262.20000000000005px;top:278.50px;line-height:12px;font-size:6.6px;font-weight:normal;color:#444;letter-spacing:-0.1px">16</div>
<div class="t" style="right:262.20000000000005px;top:240.70px;line-height:12px;font-size:6.6px;font-weight:normal;color:#444;letter-spacing:-0.1px">18</div>
<div class="t" style="left:787.2px;width:200px;text-align:center;top:594.80px;line-height:12px;font-size:6.6px;font-weight:normal;color:#444;letter-spacing:-0.1px">22</div>
<div class="t" style="left:859.3px;width:200px;text-align:center;top:594.80px;line-height:12px;font-size:6.6px;font-weight:normal;color:#444;letter-spacing:-0.1px">24</div>
<div class="t" style="left:932.2px;width:200px;text-align:center;top:594.80px;line-height:12px;font-size:6.6px;font-weight:normal;color:#444;letter-spacing:-0.1px">26</div>
<div class="t" style="left:1001.2px;width:200px;text-align:center;top:594.80px;line-height:12px;font-size:6.6px;font-weight:normal;color:#444;letter-spacing:-0.1px">28</div>
<div class="t" style="left:905px;width:200px;text-align:center;top:614.50px;line-height:12px;font-size:5.96px;font-weight:bold;color:#2f353d;">CBDC_Outstanding_amount_avg</div>
<div class="t" style="left:853px;top:415px;transform:translate(-50%,-50%) rotate(-90deg);font-size:6px;font-weight:bold;color:#2f353d;line-height:8px">Count</div>
<div class="b" style="left:1138px;top:54px;width:2px;height:586px;background:#eceff2"></div>
</body></html>
